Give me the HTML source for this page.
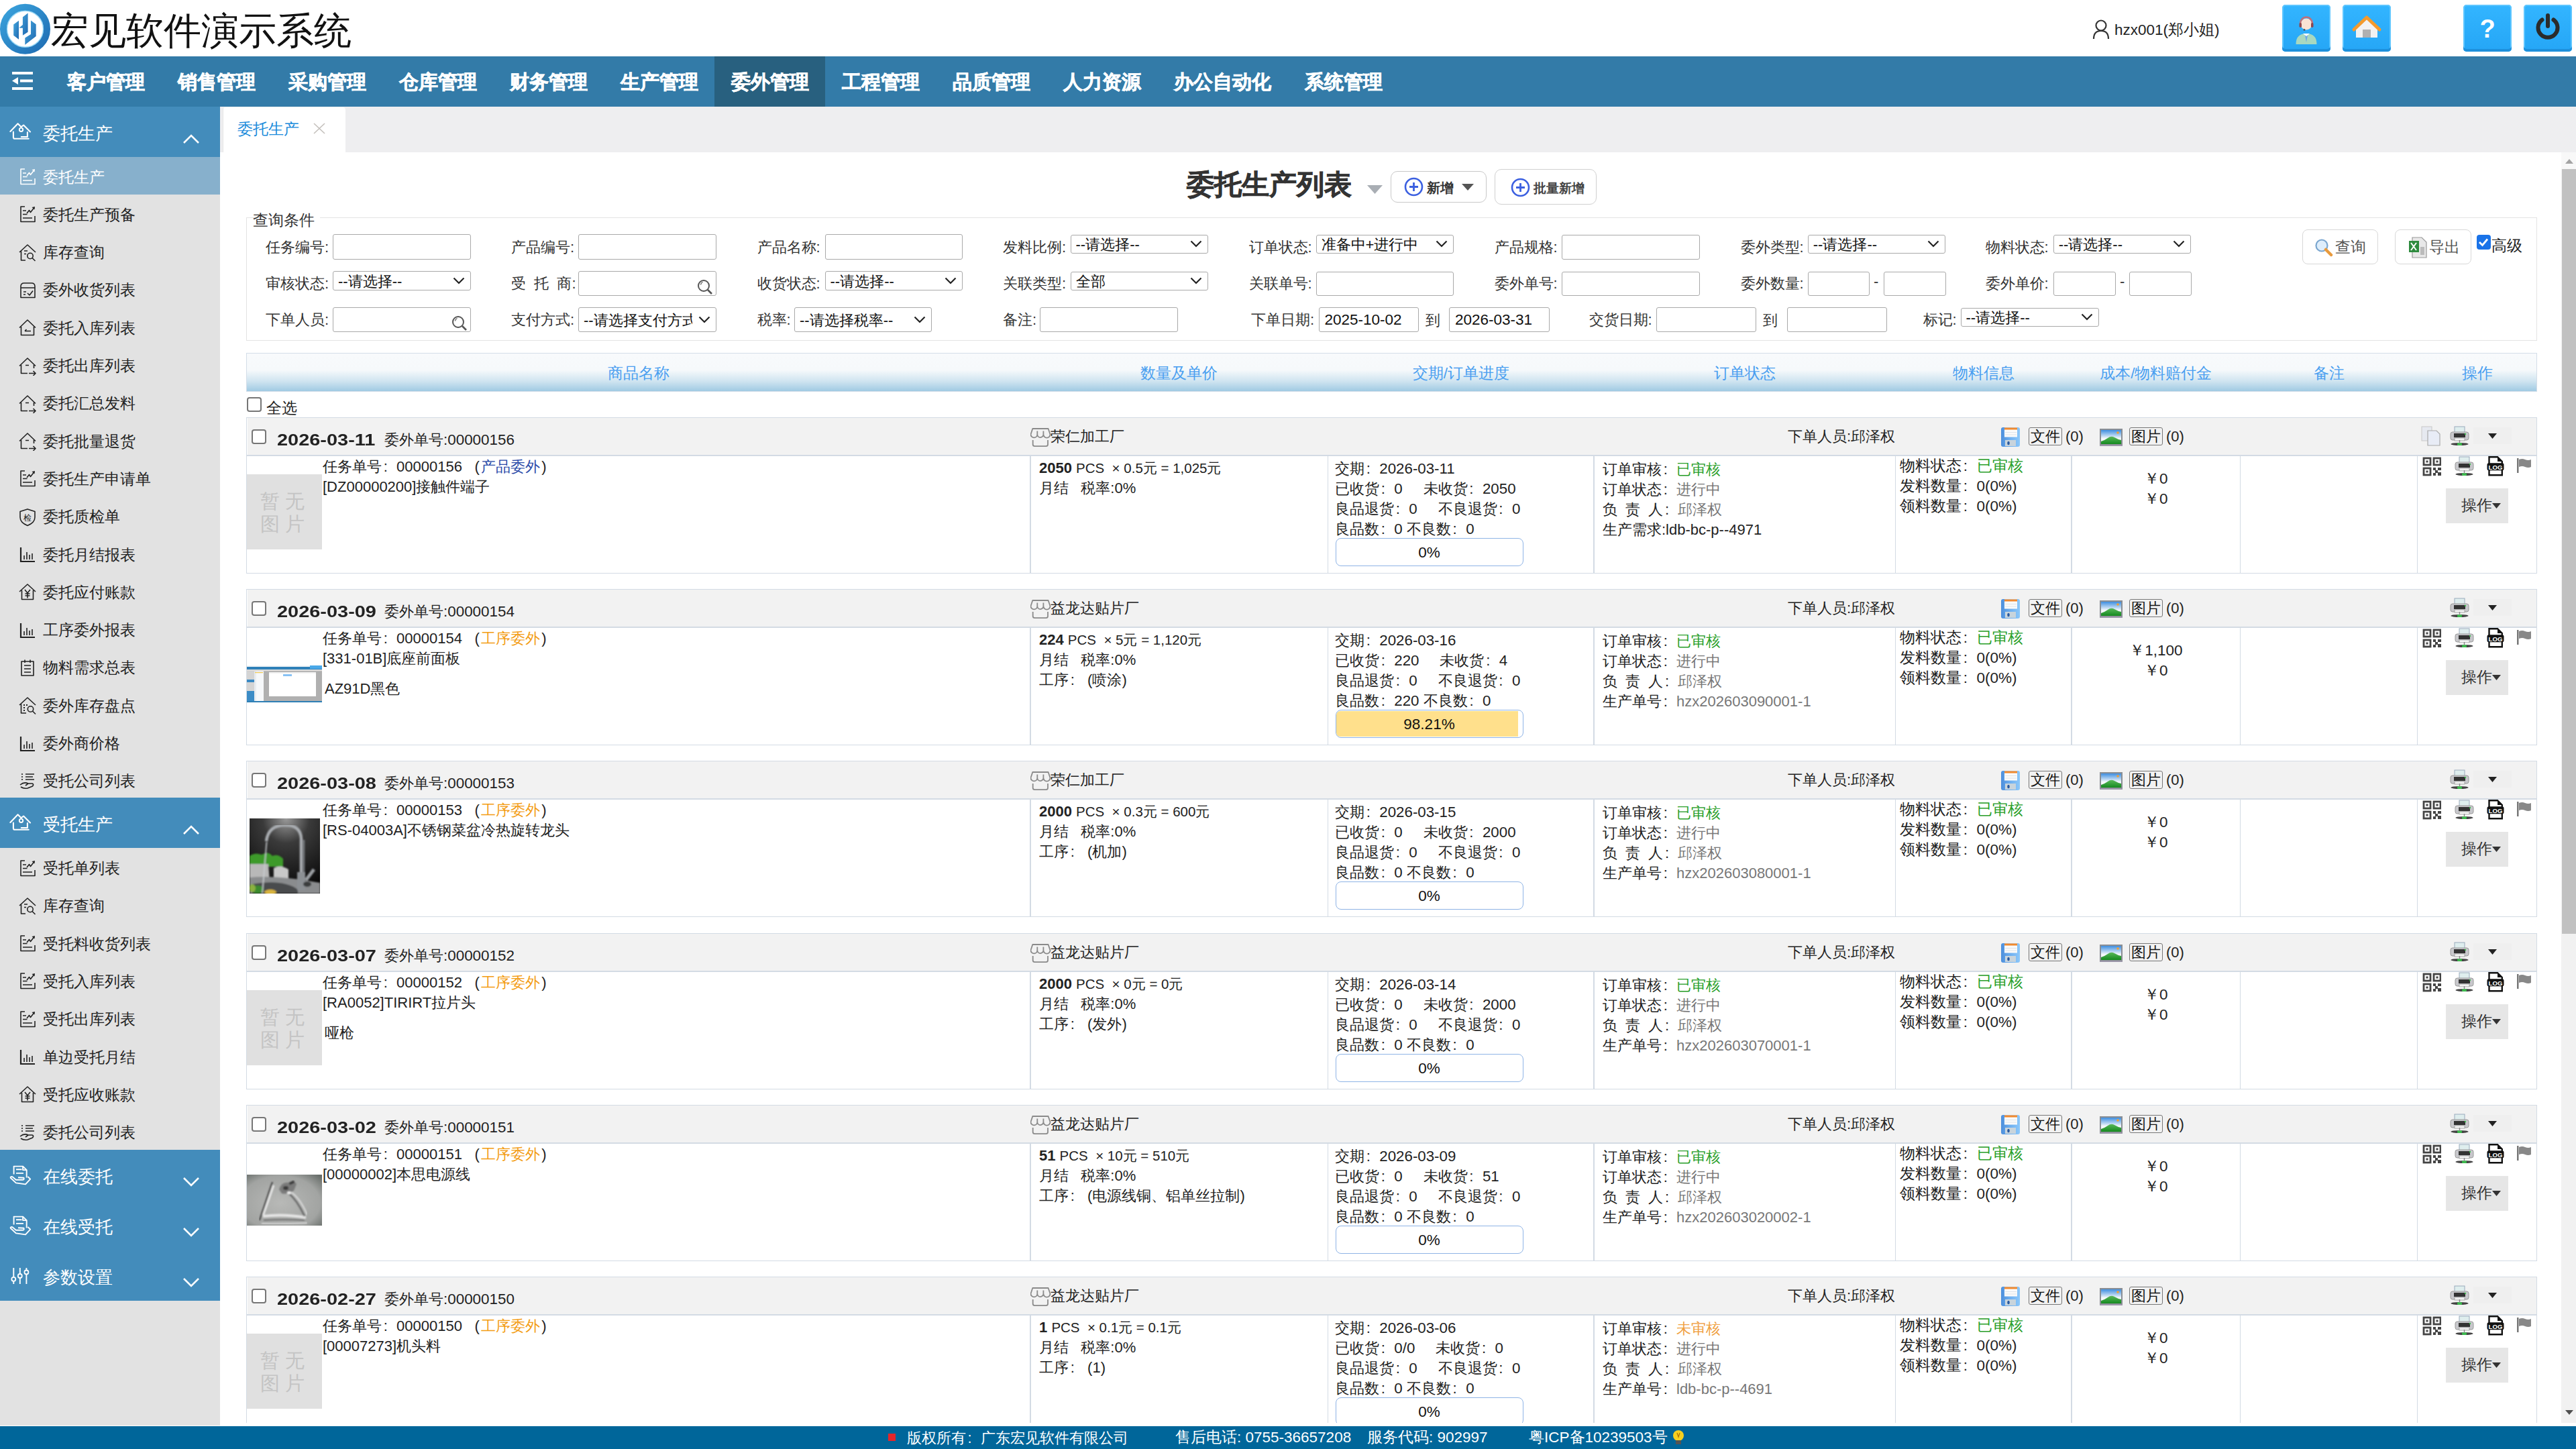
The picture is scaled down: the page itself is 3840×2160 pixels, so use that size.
<!DOCTYPE html><html><head><meta charset="utf-8"><style>
html,body{margin:0;padding:0;}
body{width:3840px;height:2160px;overflow:hidden;position:relative;background:#fff;font-family:"Liberation Sans",sans-serif;color:#222;}
.t{position:absolute;white-space:nowrap;}
.r{position:absolute;box-sizing:border-box;}
.fc{display:inline-block;width:1em;text-indent:0.12em;}
.fl{display:inline-block;width:1em;text-align:right;padding-right:0.1em;box-sizing:border-box;}
.fr{display:inline-block;width:1em;text-align:left;padding-left:0.1em;box-sizing:border-box;}
</style></head><body>
<svg class="r" style="left:0.0px;top:0.0px;" width="90" height="90" viewBox="0 0 90 90">
<defs><linearGradient id="lr" x1="0" y1="0" x2="1" y2="1"><stop offset="0" stop-color="#3aa2dc"/><stop offset="1" stop-color="#1f6db3"/></linearGradient>
<linearGradient id="lh" x1="0" y1="0" x2="1" y2="1"><stop offset="0" stop-color="#45a8de"/><stop offset="1" stop-color="#1f68b0"/></linearGradient></defs>
<circle cx="37.5" cy="43.3" r="32.5" fill="#fff" stroke="url(#lr)" stroke-width="10"/>
<circle cx="37.5" cy="43.3" r="27" fill="none" stroke="#5cc0f0" stroke-width="1.5" opacity="0.6"/>
<path d="M20.2 36.6 L28 30.7 L28 58.7 L20.2 52.8 Z" fill="url(#lh)"/>
<path d="M33.9 25.5 L41.6 19.6 L41.6 47.8 L33.9 52.8 L33.9 41.8 L28.3 41.8 L33.9 37 Z" fill="url(#lh)"/>
<path d="M46 30.4 L53.7 36.3 L53.7 54 L37.3 66.8 L37.3 56.5 L46 50.9 Z" fill="url(#lh)"/>
</svg>
<div class="t" style="left:76.0px;top:1.0px;font-size:56px;line-height:90px;color:#111;font-weight:normal;">宏见软件演示系统</div>
<svg class="r" style="left:3119.0px;top:29.0px;" width="26" height="30" viewBox="0 0 26 30"><circle cx="13" cy="9" r="7.5" fill="none" stroke="#333" stroke-width="2.2"/><path d="M2 29 C2 20 7 17 13 17 C19 17 24 20 24 29" fill="none" stroke="#333" stroke-width="2.2"/></svg>
<div class="t" style="left:3152.0px;top:27.0px;font-size:22.5px;line-height:36px;color:#222;font-weight:normal;">hzx001(郑小姐)</div>
<div class="r" style="left:3402.0px;top:7.0px;width:72.0px;height:70.0px;border-radius:5px;background:linear-gradient(#33b5ff,#25a6f6);box-shadow:inset 0 -4px 0 #1e90dc, inset 0 0 0 2px #5ec6ff;"></div>
<svg class="r" style="left:3402.0px;top:7.0px;" width="72" height="70" viewBox="0 0 72 70"><circle cx="36" cy="29" r="8.5" fill="#f8e2d4"/><path d="M27 28 a9 9.5 0 0 1 18 0" fill="none" stroke="#c0707a" stroke-width="2.5"/><rect x="25.5" y="27" width="3.5" height="7" rx="1.7" fill="#8a4750"/><rect x="43" y="27" width="3.5" height="7" rx="1.7" fill="#8a4750"/><circle cx="33" cy="37.5" r="1.4" fill="#555"/><path d="M20.5 59 C20.5 48 26 43 36 43 C46 43 51.5 48 51.5 59 Z" fill="#a8d8c0"/><path d="M33.5 43 L36 56 L38.5 43 Z" fill="#6aa6e6"/><path d="M31 43 L36 47 L41 43" fill="#fff"/></svg>
<div class="r" style="left:3492.0px;top:7.0px;width:72.0px;height:70.0px;border-radius:5px;background:linear-gradient(#33b5ff,#25a6f6);box-shadow:inset 0 -4px 0 #1e90dc, inset 0 0 0 2px #5ec6ff;"></div>
<svg class="r" style="left:3492.0px;top:7.0px;" width="72" height="70" viewBox="0 0 72 70"><path d="M20 35 L36 19 L52 35 L52 49 L20 49 Z" fill="#f2f2f2"/><path d="M17 37 L36 19 L55 37" fill="none" stroke="#f39a2c" stroke-width="5" stroke-linejoin="round" stroke-linecap="round"/>
<rect x="30" y="37" width="12" height="12" fill="#b0b0b0"/></svg>
<div class="r" style="left:3672.0px;top:7.0px;width:72.0px;height:70.0px;border-radius:5px;background:linear-gradient(#33b5ff,#25a6f6);box-shadow:inset 0 -4px 0 #1e90dc, inset 0 0 0 2px #5ec6ff;"></div>
<svg class="r" style="left:3672.0px;top:7.0px;" width="72" height="70" viewBox="0 0 72 70"><text x="36" y="49" text-anchor="middle" font-family="Liberation Sans" font-weight="bold" font-size="38" fill="#fff">?</text></svg>
<div class="r" style="left:3762.0px;top:7.0px;width:72.0px;height:70.0px;border-radius:5px;background:linear-gradient(#33b5ff,#25a6f6);box-shadow:inset 0 -4px 0 #1e90dc, inset 0 0 0 2px #5ec6ff;"></div>
<svg class="r" style="left:3762.0px;top:7.0px;" width="72" height="70" viewBox="0 0 72 70"><path d="M27.5 22.5 A14.5 14.5 0 1 0 44.5 22.5" fill="none" stroke="#2b2b2b" stroke-width="6" stroke-linecap="round"/>
<line x1="36" y1="16" x2="36" y2="32" stroke="#2b2b2b" stroke-width="6" stroke-linecap="round"/></svg>
<div class="r" style="left:0.0px;top:84.0px;width:3840.0px;height:75.0px;background:#337ba8;"></div>
<svg class="r" style="left:18.0px;top:107.0px;" width="31" height="27" viewBox="0 0 31 27"><rect x="0" y="0" width="31" height="4" fill="#fff"/><rect x="12" y="11.5" width="19" height="4" fill="#fff"/><rect x="0" y="23" width="31" height="4" fill="#fff"/><path d="M0 13.5 L9 8 L9 19 Z" fill="#fff"/></svg>
<div class="t" style="left:75.0px;width:165px;text-align:center;top:98.8px;font-size:29px;line-height:46px;color:#fff;font-weight:bold;-webkit-text-stroke:0.6px #fff;">客户管理</div>
<div class="t" style="left:240.0px;width:165px;text-align:center;top:98.8px;font-size:29px;line-height:46px;color:#fff;font-weight:bold;-webkit-text-stroke:0.6px #fff;">销售管理</div>
<div class="t" style="left:405.0px;width:165px;text-align:center;top:98.8px;font-size:29px;line-height:46px;color:#fff;font-weight:bold;-webkit-text-stroke:0.6px #fff;">采购管理</div>
<div class="t" style="left:570.0px;width:165px;text-align:center;top:98.8px;font-size:29px;line-height:46px;color:#fff;font-weight:bold;-webkit-text-stroke:0.6px #fff;">仓库管理</div>
<div class="t" style="left:735.0px;width:165px;text-align:center;top:98.8px;font-size:29px;line-height:46px;color:#fff;font-weight:bold;-webkit-text-stroke:0.6px #fff;">财务管理</div>
<div class="t" style="left:900.0px;width:165px;text-align:center;top:98.8px;font-size:29px;line-height:46px;color:#fff;font-weight:bold;-webkit-text-stroke:0.6px #fff;">生产管理</div>
<div class="r" style="left:1065.0px;top:84.0px;width:165.0px;height:75.0px;background:#28607f;"></div>
<div class="t" style="left:1065.0px;width:165px;text-align:center;top:98.8px;font-size:29px;line-height:46px;color:#fff;font-weight:bold;-webkit-text-stroke:0.6px #fff;">委外管理</div>
<div class="t" style="left:1230.0px;width:165px;text-align:center;top:98.8px;font-size:29px;line-height:46px;color:#fff;font-weight:bold;-webkit-text-stroke:0.6px #fff;">工程管理</div>
<div class="t" style="left:1395.0px;width:165px;text-align:center;top:98.8px;font-size:29px;line-height:46px;color:#fff;font-weight:bold;-webkit-text-stroke:0.6px #fff;">品质管理</div>
<div class="t" style="left:1560.0px;width:165px;text-align:center;top:98.8px;font-size:29px;line-height:46px;color:#fff;font-weight:bold;-webkit-text-stroke:0.6px #fff;">人力资源</div>
<div class="t" style="left:1725.0px;width:195px;text-align:center;top:98.8px;font-size:29px;line-height:46px;color:#fff;font-weight:bold;-webkit-text-stroke:0.6px #fff;">办公自动化</div>
<div class="t" style="left:1920.0px;width:165px;text-align:center;top:98.8px;font-size:29px;line-height:46px;color:#fff;font-weight:bold;-webkit-text-stroke:0.6px #fff;">系统管理</div>
<div class="r" style="left:0.0px;top:159.0px;width:328.0px;height:1966.0px;background:#e2e2e2;"></div>
<div class="r" style="left:0.0px;top:159.0px;width:328.0px;height:75.0px;background:#438cbb;"></div>
<svg class="r" style="left:14.0px;top:181.0px;" width="34" height="32" viewBox="0 0 34 32"><path d="M1.4 15 L12.6 3.3 L17.5 8.3 M17.8 8 L21.1 5.6 L31 15.5 M5.9 15.5 V23.5 Q5.9 25.8 8 25.8 H28.7 M26.9 16 V23 H17.8" fill="none" stroke="#fff" stroke-width="2.1" stroke-linejoin="round" stroke-linecap="round"/><circle cx="17.5" cy="12.3" r="2.7" fill="none" stroke="#fff" stroke-width="1.9"/></svg>
<div class="t" style="left:63.5px;top:177.5px;font-size:26px;line-height:42px;color:#fff;font-weight:normal;">委托生产</div>
<svg class="r" style="left:272.0px;top:200.0px;" width="26" height="15" viewBox="0 0 26 15"><path d="M2 13 L13 2 L24 13" fill="none" stroke="#fff" stroke-width="2.6"/></svg>
<div class="r" style="left:0.0px;top:234.0px;width:328.0px;height:56.0px;background:#87b0cc;"></div>
<svg class="r" style="left:28.0px;top:250.0px;" width="27" height="28" viewBox="0 0 27 28"><path d="M9 2 H3 V24.5 H24 V16 M6 8 H11 M6 13.5 H12.5 M6 19 H20 M12 12 L15.5 7.5 L17.5 10.5 L23 3.5" stroke="#fff" stroke-width="1.6" fill="none" stroke-linejoin="round"/><path d="M19.5 3 L24 2 L23.5 6.5 Z" fill="#fff"/></svg>
<div class="t" style="left:64.0px;top:246.5px;font-size:22.5px;line-height:36px;color:#fff;font-weight:normal;">委托生产</div>
<svg class="r" style="left:28.0px;top:306.3px;" width="27" height="28" viewBox="0 0 27 28"><path d="M9 2 H3 V24.5 H24 V16 M6 8 H11 M6 13.5 H12.5 M6 19 H20 M12 12 L15.5 7.5 L17.5 10.5 L23 3.5" stroke="#222" stroke-width="1.6" fill="none" stroke-linejoin="round"/><path d="M19.5 3 L24 2 L23.5 6.5 Z" fill="#222"/></svg>
<div class="t" style="left:64.0px;top:302.8px;font-size:22.5px;line-height:36px;color:#222;font-weight:normal;">委托生产预备</div>
<svg class="r" style="left:28.0px;top:362.6px;" width="27" height="28" viewBox="0 0 27 28"><path d="M1 13 L13 2 L25 13 M3.5 11.5 V25 H10 M8 11 H13 M8 15.5 H11" stroke="#222" stroke-width="1.6" fill="none" stroke-linejoin="round"/><circle cx="17" cy="18.5" r="4.2" stroke="#222" stroke-width="1.6" fill="none" stroke-linejoin="round"/><path d="M20 21.5 L24.5 26" stroke="#222" stroke-width="1.6" fill="none" stroke-linejoin="round"/></svg>
<div class="t" style="left:64.0px;top:359.1px;font-size:22.5px;line-height:36px;color:#222;font-weight:normal;">库存查询</div>
<svg class="r" style="left:28.0px;top:418.9px;" width="27" height="28" viewBox="0 0 27 28"><path d="M3 24.5 V8 Q3 3 8 3 H19 Q24 3 24 8 V24.5 Z M3 10 H24 M7 16 H11 M7 20 H10 M13 18 L16 21 L21 14.5" stroke="#222" stroke-width="1.6" fill="none" stroke-linejoin="round"/></svg>
<div class="t" style="left:64.0px;top:415.4px;font-size:22.5px;line-height:36px;color:#222;font-weight:normal;">委外收货列表</div>
<svg class="r" style="left:28.0px;top:475.2px;" width="27" height="28" viewBox="0 0 27 28"><path d="M1 13.5 L13 2 L25 13.5 M3.5 12 V24.5 H22.5 V12 M9 18.5 H18" stroke="#222" stroke-width="1.6" fill="none" stroke-linejoin="round"/><path d="M9 18.5 L11.5 16" stroke="#222" stroke-width="1.6" fill="none" stroke-linejoin="round"/></svg>
<div class="t" style="left:64.0px;top:471.7px;font-size:22.5px;line-height:36px;color:#222;font-weight:normal;">委托入库列表</div>
<svg class="r" style="left:28.0px;top:531.5px;" width="27" height="28" viewBox="0 0 27 28"><path d="M1 13.5 L13 2 L25 13.5 M3.5 12 V24.5 H13 M22.5 12 V17 M10 12.5 H15 M15 24.5 H25" stroke="#222" stroke-width="1.6" fill="none" stroke-linejoin="round"/><path d="M21.5 21 L25 24.5 L21.5 28" stroke="#222" stroke-width="1.6" fill="none" stroke-linejoin="round"/></svg>
<div class="t" style="left:64.0px;top:528.0px;font-size:22.5px;line-height:36px;color:#222;font-weight:normal;">委托出库列表</div>
<svg class="r" style="left:28.0px;top:587.8px;" width="27" height="28" viewBox="0 0 27 28"><path d="M1 13.5 L13 2 L25 13.5 M3.5 12 V24.5 H13 M22.5 12 V17 M10 12.5 H15 M15 24.5 H25" stroke="#222" stroke-width="1.6" fill="none" stroke-linejoin="round"/><path d="M21.5 21 L25 24.5 L21.5 28" stroke="#222" stroke-width="1.6" fill="none" stroke-linejoin="round"/></svg>
<div class="t" style="left:64.0px;top:584.3px;font-size:22.5px;line-height:36px;color:#222;font-weight:normal;">委托汇总发料</div>
<svg class="r" style="left:28.0px;top:644.1px;" width="27" height="28" viewBox="0 0 27 28"><path d="M1 13.5 L13 2 L25 13.5 M3.5 12 V24.5 H13 M22.5 12 V17 M10 12.5 H15 M15 24.5 H25" stroke="#222" stroke-width="1.6" fill="none" stroke-linejoin="round"/><path d="M21.5 21 L25 24.5 L21.5 28" stroke="#222" stroke-width="1.6" fill="none" stroke-linejoin="round"/></svg>
<div class="t" style="left:64.0px;top:640.6px;font-size:22.5px;line-height:36px;color:#222;font-weight:normal;">委托批量退货</div>
<svg class="r" style="left:28.0px;top:700.4px;" width="27" height="28" viewBox="0 0 27 28"><path d="M9 2 H3 V24.5 H24 V16 M6 8 H11 M6 13.5 H12.5 M6 19 H20 M12 12 L15.5 7.5 L17.5 10.5 L23 3.5" stroke="#222" stroke-width="1.6" fill="none" stroke-linejoin="round"/><path d="M19.5 3 L24 2 L23.5 6.5 Z" fill="#222"/></svg>
<div class="t" style="left:64.0px;top:696.9px;font-size:22.5px;line-height:36px;color:#222;font-weight:normal;">委托生产申请单</div>
<svg class="r" style="left:28.0px;top:756.7px;" width="27" height="28" viewBox="0 0 27 28"><path d="M13 2 L24 5.5 V14 Q24 22 13 26.5 Q2 22 2 14 V5.5 Z" stroke="#222" stroke-width="1.6" fill="none" stroke-linejoin="round"/><text x="13" y="18.5" font-size="12" text-anchor="middle" fill="#222">检</text></svg>
<div class="t" style="left:64.0px;top:753.2px;font-size:22.5px;line-height:36px;color:#222;font-weight:normal;">委托质检单</div>
<svg class="r" style="left:28.0px;top:813.0px;" width="27" height="28" viewBox="0 0 27 28"><path d="M3 3 V24 H24" stroke="#222" stroke-width="2.2" fill="none"/><path d="M8 15 V21 M12 10 V21 M16 14 V21 M20 12 V21" stroke="#222" stroke-width="1.6" fill="none" stroke-linejoin="round"/></svg>
<div class="t" style="left:64.0px;top:809.5px;font-size:22.5px;line-height:36px;color:#222;font-weight:normal;">委托月结报表</div>
<svg class="r" style="left:28.0px;top:869.3px;" width="27" height="28" viewBox="0 0 27 28"><path d="M1 13 L13 2 L25 13 M4.5 11 V24.5 H21.5 V11" stroke="#222" stroke-width="1.6" fill="none" stroke-linejoin="round"/><path d="M9 10 L13 15 L17 10 M13 15 V22.5 M9.5 16 H16.5 M9.5 19 H16.5" stroke="#222" stroke-width="1.6" fill="none"/></svg>
<div class="t" style="left:64.0px;top:865.8px;font-size:22.5px;line-height:36px;color:#222;font-weight:normal;">委托应付账款</div>
<svg class="r" style="left:28.0px;top:925.6px;" width="27" height="28" viewBox="0 0 27 28"><path d="M3 3 V24 H24" stroke="#222" stroke-width="2.2" fill="none"/><path d="M8 15 V21 M12 10 V21 M16 14 V21 M20 12 V21" stroke="#222" stroke-width="1.6" fill="none" stroke-linejoin="round"/></svg>
<div class="t" style="left:64.0px;top:922.1px;font-size:22.5px;line-height:36px;color:#222;font-weight:normal;">工序委外报表</div>
<svg class="r" style="left:28.0px;top:981.9px;" width="27" height="28" viewBox="0 0 27 28"><path d="M4 4 H22 V25 H4 Z M8 10 H18 M8 15 H18 M8 20 H18 M9 1.5 V6 M17 1.5 V6" stroke="#222" stroke-width="1.6" fill="none" stroke-linejoin="round"/></svg>
<div class="t" style="left:64.0px;top:978.4px;font-size:22.5px;line-height:36px;color:#222;font-weight:normal;">物料需求总表</div>
<svg class="r" style="left:28.0px;top:1038.2px;" width="27" height="28" viewBox="0 0 27 28"><path d="M1 13 L13 2 L25 13 M3.5 11.5 V25 H11" stroke="#222" stroke-width="1.6" fill="none" stroke-linejoin="round"/><circle cx="17.5" cy="19" r="4.2" stroke="#222" stroke-width="1.6" fill="none" stroke-linejoin="round"/><path d="M20.5 22 L25 26.5" stroke="#222" stroke-width="1.6" fill="none" stroke-linejoin="round"/><g fill="#222"><rect x="7" y="12" width="2" height="2"/><rect x="7" y="16" width="2" height="2"/><rect x="7" y="20" width="2" height="2"/><rect x="11" y="12" width="2" height="2"/></g></svg>
<div class="t" style="left:64.0px;top:1034.7px;font-size:22.5px;line-height:36px;color:#222;font-weight:normal;">委外库存盘点</div>
<svg class="r" style="left:28.0px;top:1094.5px;" width="27" height="28" viewBox="0 0 27 28"><path d="M3 3 V24 H24" stroke="#222" stroke-width="2.2" fill="none"/><path d="M8 15 V21 M12 10 V21 M16 14 V21 M20 12 V21" stroke="#222" stroke-width="1.6" fill="none" stroke-linejoin="round"/></svg>
<div class="t" style="left:64.0px;top:1091.0px;font-size:22.5px;line-height:36px;color:#222;font-weight:normal;">委外商价格</div>
<svg class="r" style="left:28.0px;top:1150.8px;" width="27" height="28" viewBox="0 0 27 28"><path d="M10 3 H23 M10 7 H21 M10 11 H23 M2 19 Q8 14 14 17 L20 17 Q23 18 20.5 21 L13 24 Q7 25 3 22" stroke="#222" stroke-width="1.6" fill="none" stroke-linejoin="round"/><path d="M14 17 L10 20" stroke="#222" stroke-width="1.6" fill="none" stroke-linejoin="round"/><g fill="#222"><circle cx="5" cy="3" r="1.1"/><circle cx="5" cy="7" r="1.1"/><circle cx="5" cy="11" r="1.1"/></g></svg>
<div class="t" style="left:64.0px;top:1147.3px;font-size:22.5px;line-height:36px;color:#222;font-weight:normal;">受托公司列表</div>
<div class="r" style="left:0.0px;top:1189.0px;width:328.0px;height:75.0px;background:#438cbb;"></div>
<svg class="r" style="left:14.0px;top:1211.0px;" width="34" height="32" viewBox="0 0 34 32"><path d="M1.4 15 L12.6 3.3 L17.5 8.3 M17.8 8 L21.1 5.6 L31 15.5 M5.9 15.5 V23.5 Q5.9 25.8 8 25.8 H28.7 M26.9 16 V23 H17.8" fill="none" stroke="#fff" stroke-width="2.1" stroke-linejoin="round" stroke-linecap="round"/><circle cx="17.5" cy="12.3" r="2.7" fill="none" stroke="#fff" stroke-width="1.9"/></svg>
<div class="t" style="left:63.5px;top:1207.5px;font-size:26px;line-height:42px;color:#fff;font-weight:normal;">受托生产</div>
<svg class="r" style="left:272.0px;top:1230.0px;" width="26" height="15" viewBox="0 0 26 15"><path d="M2 13 L13 2 L24 13" fill="none" stroke="#fff" stroke-width="2.6"/></svg>
<svg class="r" style="left:28.0px;top:1280.5px;" width="27" height="28" viewBox="0 0 27 28"><path d="M9 2 H3 V24.5 H24 V16 M6 8 H11 M6 13.5 H12.5 M6 19 H20 M12 12 L15.5 7.5 L17.5 10.5 L23 3.5" stroke="#222" stroke-width="1.6" fill="none" stroke-linejoin="round"/><path d="M19.5 3 L24 2 L23.5 6.5 Z" fill="#222"/></svg>
<div class="t" style="left:64.0px;top:1277.0px;font-size:22.5px;line-height:36px;color:#222;font-weight:normal;">受托单列表</div>
<svg class="r" style="left:28.0px;top:1336.8px;" width="27" height="28" viewBox="0 0 27 28"><path d="M1 13 L13 2 L25 13 M3.5 11.5 V25 H10 M8 11 H13 M8 15.5 H11" stroke="#222" stroke-width="1.6" fill="none" stroke-linejoin="round"/><circle cx="17" cy="18.5" r="4.2" stroke="#222" stroke-width="1.6" fill="none" stroke-linejoin="round"/><path d="M20 21.5 L24.5 26" stroke="#222" stroke-width="1.6" fill="none" stroke-linejoin="round"/></svg>
<div class="t" style="left:64.0px;top:1333.3px;font-size:22.5px;line-height:36px;color:#222;font-weight:normal;">库存查询</div>
<svg class="r" style="left:28.0px;top:1393.1px;" width="27" height="28" viewBox="0 0 27 28"><path d="M9 2 H3 V24.5 H24 V16 M6 8 H11 M6 13.5 H12.5 M6 19 H20 M12 12 L15.5 7.5 L17.5 10.5 L23 3.5" stroke="#222" stroke-width="1.6" fill="none" stroke-linejoin="round"/><path d="M19.5 3 L24 2 L23.5 6.5 Z" fill="#222"/></svg>
<div class="t" style="left:64.0px;top:1389.6px;font-size:22.5px;line-height:36px;color:#222;font-weight:normal;">受托料收货列表</div>
<svg class="r" style="left:28.0px;top:1449.4px;" width="27" height="28" viewBox="0 0 27 28"><path d="M9 2 H3 V24.5 H24 V16 M6 8 H11 M6 13.5 H12.5 M6 19 H20 M12 12 L15.5 7.5 L17.5 10.5 L23 3.5" stroke="#222" stroke-width="1.6" fill="none" stroke-linejoin="round"/><path d="M19.5 3 L24 2 L23.5 6.5 Z" fill="#222"/></svg>
<div class="t" style="left:64.0px;top:1445.9px;font-size:22.5px;line-height:36px;color:#222;font-weight:normal;">受托入库列表</div>
<svg class="r" style="left:28.0px;top:1505.7px;" width="27" height="28" viewBox="0 0 27 28"><path d="M9 2 H3 V24.5 H24 V16 M6 8 H11 M6 13.5 H12.5 M6 19 H20 M12 12 L15.5 7.5 L17.5 10.5 L23 3.5" stroke="#222" stroke-width="1.6" fill="none" stroke-linejoin="round"/><path d="M19.5 3 L24 2 L23.5 6.5 Z" fill="#222"/></svg>
<div class="t" style="left:64.0px;top:1502.2px;font-size:22.5px;line-height:36px;color:#222;font-weight:normal;">受托出库列表</div>
<svg class="r" style="left:28.0px;top:1562.0px;" width="27" height="28" viewBox="0 0 27 28"><path d="M3 3 V24 H24" stroke="#222" stroke-width="2.2" fill="none"/><path d="M8 15 V21 M12 10 V21 M16 14 V21 M20 12 V21" stroke="#222" stroke-width="1.6" fill="none" stroke-linejoin="round"/></svg>
<div class="t" style="left:64.0px;top:1558.5px;font-size:22.5px;line-height:36px;color:#222;font-weight:normal;">单边受托月结</div>
<svg class="r" style="left:28.0px;top:1618.3px;" width="27" height="28" viewBox="0 0 27 28"><path d="M1 13 L13 2 L25 13 M4.5 11 V24.5 H21.5 V11" stroke="#222" stroke-width="1.6" fill="none" stroke-linejoin="round"/><path d="M9 10 L13 15 L17 10 M13 15 V22.5 M9.5 16 H16.5 M9.5 19 H16.5" stroke="#222" stroke-width="1.6" fill="none"/></svg>
<div class="t" style="left:64.0px;top:1614.8px;font-size:22.5px;line-height:36px;color:#222;font-weight:normal;">受托应收账款</div>
<svg class="r" style="left:28.0px;top:1674.6px;" width="27" height="28" viewBox="0 0 27 28"><path d="M10 3 H23 M10 7 H21 M10 11 H23 M2 19 Q8 14 14 17 L20 17 Q23 18 20.5 21 L13 24 Q7 25 3 22" stroke="#222" stroke-width="1.6" fill="none" stroke-linejoin="round"/><path d="M14 17 L10 20" stroke="#222" stroke-width="1.6" fill="none" stroke-linejoin="round"/><g fill="#222"><circle cx="5" cy="3" r="1.1"/><circle cx="5" cy="7" r="1.1"/><circle cx="5" cy="11" r="1.1"/></g></svg>
<div class="t" style="left:64.0px;top:1671.1px;font-size:22.5px;line-height:36px;color:#222;font-weight:normal;">委托公司列表</div>
<div class="r" style="left:0.0px;top:1714.0px;width:328.0px;height:75.0px;background:#438cbb;"></div>
<svg class="r" style="left:14.0px;top:1736.0px;" width="34" height="32" viewBox="0 0 34 32"><path d="M6.6 14.5 V2.6 H20.1 L25.7 8.1 V19.5 M20.1 2.6 V8.1 H25.7 M10 7.3 H18.5 M10 12.9 H21 M1.2 19.2 Q3 17.2 5 18.6 L9.8 22.8 H19.5 Q22.5 22.8 21.5 19.8 L13 19.2 M1.2 19.2 L9.8 27.4 L24 29.4 L31.2 21.6 L27.5 18" fill="none" stroke="#fff" stroke-width="1.9" stroke-linejoin="round"/></svg>
<div class="t" style="left:63.5px;top:1732.5px;font-size:26px;line-height:42px;color:#fff;font-weight:normal;">在线委托</div>
<svg class="r" style="left:272.0px;top:1754.0px;" width="26" height="15" viewBox="0 0 26 15"><path d="M2 2 L13 13 L24 2" fill="none" stroke="#fff" stroke-width="2.6"/></svg>
<div class="r" style="left:0.0px;top:1789.0px;width:328.0px;height:75.0px;background:#438cbb;"></div>
<svg class="r" style="left:14.0px;top:1811.0px;" width="34" height="32" viewBox="0 0 34 32"><path d="M6.6 14.5 V2.6 H20.1 L25.7 8.1 V19.5 M20.1 2.6 V8.1 H25.7 M10 7.3 H18.5 M10 12.9 H21 M1.2 19.2 Q3 17.2 5 18.6 L9.8 22.8 H19.5 Q22.5 22.8 21.5 19.8 L13 19.2 M1.2 19.2 L9.8 27.4 L24 29.4 L31.2 21.6 L27.5 18" fill="none" stroke="#fff" stroke-width="1.9" stroke-linejoin="round"/></svg>
<div class="t" style="left:63.5px;top:1807.5px;font-size:26px;line-height:42px;color:#fff;font-weight:normal;">在线受托</div>
<svg class="r" style="left:272.0px;top:1829.0px;" width="26" height="15" viewBox="0 0 26 15"><path d="M2 2 L13 13 L24 2" fill="none" stroke="#fff" stroke-width="2.6"/></svg>
<div class="r" style="left:0.0px;top:1864.0px;width:328.0px;height:75.0px;background:#438cbb;"></div>
<svg class="r" style="left:14.0px;top:1886.0px;" width="34" height="32" viewBox="0 0 34 32"><path d="M6.3 4 V28 M15.8 4 V28 M25.4 4 V28" stroke="#fff" stroke-width="1.9"/><circle cx="6.3" cy="20.8" r="3" fill="#438cbb" stroke="#fff" stroke-width="1.8"/><circle cx="15.8" cy="16" r="3" fill="#438cbb" stroke="#fff" stroke-width="1.8"/><circle cx="25.4" cy="10.5" r="3" fill="#438cbb" stroke="#fff" stroke-width="1.8"/></svg>
<div class="t" style="left:63.5px;top:1882.5px;font-size:26px;line-height:42px;color:#fff;font-weight:normal;">参数设置</div>
<svg class="r" style="left:272.0px;top:1904.0px;" width="26" height="15" viewBox="0 0 26 15"><path d="M2 2 L13 13 L24 2" fill="none" stroke="#fff" stroke-width="2.6"/></svg>
<div class="r" style="left:328.0px;top:159.0px;width:3512.0px;height:67.5px;background:#eeeef0;"></div>
<div class="r" style="left:332.0px;top:160.0px;width:183.0px;height:66.5px;background:#fff;border-left:1px solid #e6e6e6;border-top-right-radius:4px;border-top-left-radius:3px;"></div>
<div class="t" style="left:354.0px;top:174.5px;font-size:22.5px;line-height:36px;color:#1b8bdb;font-weight:normal;">委托生产</div>
<svg class="r" style="left:467.0px;top:182.5px;" width="18" height="17" viewBox="0 0 18 17"><path d="M1 1 L17 16 M17 1 L1 16" stroke="#c4c0bc" stroke-width="1.6"/></svg>
<div class="r" style="left:3818.0px;top:226.5px;width:22.0px;height:1894.0px;background:#f1f1f1;"></div>
<div class="r" style="left:3818.0px;top:226.5px;width:22.0px;height:25.0px;background:#f8f8f8;"></div>
<div class="r" style="left:3819.0px;top:251.5px;width:21.0px;height:1140.0px;background:#c1c1c1;"></div>
<svg class="r" style="left:3823.5px;top:237.0px;" width="12" height="7" viewBox="0 0 12 7"><path d="M0 7 L6 0 L12 7 Z" fill="#a3a3a3"/></svg>
<svg class="r" style="left:3823.5px;top:2102.0px;" width="12" height="7" viewBox="0 0 12 7"><path d="M0 0 L6 7 L12 0 Z" fill="#505050"/></svg>
<div class="t" style="left:1769.0px;top:242.0px;font-size:41.3px;line-height:66px;color:#333;font-weight:bold;-webkit-text-stroke:0.7px #333;">委托生产列表</div>
<svg class="r" style="left:2038.0px;top:276.0px;" width="23" height="13" viewBox="0 0 23 13"><path d="M0 0 L23 0 L11.5 13 Z" fill="#a9aeb4"/></svg>
<div class="r" style="left:2073.0px;top:255.0px;width:143.0px;height:47.0px;border:1px solid #c8c8c8;border-radius:10px;background:#fff;"></div>
<svg class="r" style="left:2093.0px;top:264.0px;" width="29" height="29" viewBox="0 0 29 29"><circle cx="14.5" cy="14.5" r="12.5" fill="none" stroke="#3b5fe0" stroke-width="2.6"/><path d="M14.5 8 V21 M8 14.5 H21" stroke="#3b5fe0" stroke-width="2.8"/></svg>
<div class="t" style="left:2127.0px;top:265.0px;font-size:19.5px;line-height:31px;color:#333;font-weight:bold;">新增</div>
<svg class="r" style="left:2179.0px;top:274.0px;" width="18" height="10" viewBox="0 0 18 10"><path d="M0 0 L18 0 L9 10 Z" fill="#555"/></svg>
<div class="r" style="left:2228.0px;top:252.0px;width:152.0px;height:53.0px;border:1px solid #d0d0d0;border-radius:10px;background:#fff;"></div>
<svg class="r" style="left:2252.0px;top:265.0px;" width="29" height="29" viewBox="0 0 29 29"><circle cx="14.5" cy="14.5" r="12.5" fill="none" stroke="#3b5fe0" stroke-width="2.6"/><path d="M14.5 8 V21 M8 14.5 H21" stroke="#3b5fe0" stroke-width="2.8"/></svg>
<div class="t" style="left:2286.0px;top:265.5px;font-size:19px;line-height:30px;color:#444;font-weight:bold;">批量新增</div>
<div class="r" style="left:366.5px;top:324.0px;width:3415.0px;height:183.5px;border:1.5px solid #e3e3e3;border-top:none;"></div>
<div class="r" style="left:366.5px;top:323.5px;width:20.0px;height:1.5px;background:#e3e3e3;"></div>
<div class="r" style="left:477.0px;top:323.5px;width:3304.5px;height:1.5px;background:#e3e3e3;"></div>
<div class="t" style="left:377.0px;top:311.0px;font-size:22.5px;line-height:36px;color:#333;font-weight:normal;">查询条件</div>
<div class="t" style="left:396.0px;top:350.5px;font-size:22px;line-height:35px;color:#333;font-weight:normal;">任务编号:</div>
<div class="r" style="left:496.0px;top:349.0px;width:206.0px;height:38.0px;border:1.5px solid #a9a9a9;border-radius:3px;background:#fff;"></div>
<div class="t" style="left:396.0px;top:405.0px;font-size:22px;line-height:35px;color:#333;font-weight:normal;">审核状态:</div>
<div class="r" style="left:496.0px;top:404.0px;width:206.0px;height:29.0px;border:1.5px solid #a9a9a9;border-radius:3px;background:#fff;"></div>
<div class="t" style="left:504.0px;top:401.5px;font-size:22px;line-height:35px;color:#111;font-weight:normal;width:162px;overflow:hidden;">--请选择--</div>
<svg class="r" style="left:675.0px;top:412.5px;" width="18" height="11" viewBox="0 0 18 11"><path d="M1.5 1.5 L9 9 L16.5 1.5" fill="none" stroke="#222" stroke-width="2.2"/></svg>
<div class="t" style="left:396.0px;top:459.0px;font-size:22px;line-height:35px;color:#333;font-weight:normal;">下单人员:</div>
<div class="r" style="left:496.0px;top:458.0px;width:206.0px;height:37.0px;border:1.5px solid #a9a9a9;border-radius:3px;background:#fff;"></div>
<svg class="r" style="left:672.0px;top:469.0px;" width="26" height="26" viewBox="0 0 26 26"><circle cx="11" cy="11" r="8" fill="none" stroke="#555" stroke-width="2"/><path d="M6.5 9.5 a5 5 0 0 1 3-4" fill="none" stroke="#555" stroke-width="1.3"/><path d="M17 17 L23 23" stroke="#555" stroke-width="2.6"/></svg>
<div class="t" style="left:762.0px;top:350.5px;font-size:22px;line-height:35px;color:#333;font-weight:normal;">产品编号:</div>
<div class="r" style="left:862.0px;top:349.0px;width:206.0px;height:38.0px;border:1.5px solid #a9a9a9;border-radius:3px;background:#fff;"></div>
<div class="t" style="left:762.0px;top:405.0px;font-size:22px;line-height:35px;color:#333;font-weight:normal;">受&nbsp;&nbsp;托&nbsp;&nbsp;商:</div>
<div class="r" style="left:862.0px;top:404.0px;width:206.0px;height:37.0px;border:1.5px solid #a9a9a9;border-radius:3px;background:#fff;"></div>
<svg class="r" style="left:1038.0px;top:415.0px;" width="26" height="26" viewBox="0 0 26 26"><circle cx="11" cy="11" r="8" fill="none" stroke="#555" stroke-width="2"/><path d="M6.5 9.5 a5 5 0 0 1 3-4" fill="none" stroke="#555" stroke-width="1.3"/><path d="M17 17 L23 23" stroke="#555" stroke-width="2.6"/></svg>
<div class="t" style="left:762.0px;top:459.0px;font-size:22px;line-height:35px;color:#333;font-weight:normal;">支付方式:</div>
<div class="r" style="left:862.0px;top:458.0px;width:206.0px;height:37.0px;border:1.5px solid #a9a9a9;border-radius:3px;background:#fff;"></div>
<div class="t" style="left:870.0px;top:459.5px;font-size:22px;line-height:35px;color:#111;font-weight:normal;width:162px;overflow:hidden;">--请选择支付方式</div>
<svg class="r" style="left:1041.0px;top:470.5px;" width="18" height="11" viewBox="0 0 18 11"><path d="M1.5 1.5 L9 9 L16.5 1.5" fill="none" stroke="#222" stroke-width="2.2"/></svg>
<div class="t" style="left:1128.5px;top:350.5px;font-size:22px;line-height:35px;color:#333;font-weight:normal;">产品名称:</div>
<div class="r" style="left:1229.5px;top:349.0px;width:205.0px;height:38.0px;border:1.5px solid #a9a9a9;border-radius:3px;background:#fff;"></div>
<div class="t" style="left:1128.5px;top:405.0px;font-size:22px;line-height:35px;color:#333;font-weight:normal;">收货状态:</div>
<div class="r" style="left:1229.5px;top:404.0px;width:205.0px;height:29.0px;border:1.5px solid #a9a9a9;border-radius:3px;background:#fff;"></div>
<div class="t" style="left:1237.5px;top:401.5px;font-size:22px;line-height:35px;color:#111;font-weight:normal;width:161px;overflow:hidden;">--请选择--</div>
<svg class="r" style="left:1407.5px;top:412.5px;" width="18" height="11" viewBox="0 0 18 11"><path d="M1.5 1.5 L9 9 L16.5 1.5" fill="none" stroke="#222" stroke-width="2.2"/></svg>
<div class="t" style="left:1128.5px;top:459.0px;font-size:22px;line-height:35px;color:#333;font-weight:normal;">税率:</div>
<div class="r" style="left:1184.0px;top:458.0px;width:205.0px;height:37.0px;border:1.5px solid #a9a9a9;border-radius:3px;background:#fff;"></div>
<div class="t" style="left:1192.0px;top:459.5px;font-size:22px;line-height:35px;color:#111;font-weight:normal;width:161px;overflow:hidden;">--请选择税率--</div>
<svg class="r" style="left:1362.0px;top:470.5px;" width="18" height="11" viewBox="0 0 18 11"><path d="M1.5 1.5 L9 9 L16.5 1.5" fill="none" stroke="#222" stroke-width="2.2"/></svg>
<div class="t" style="left:1495.0px;top:350.5px;font-size:22px;line-height:35px;color:#333;font-weight:normal;">发料比例:</div>
<div class="r" style="left:1595.5px;top:349.5px;width:205.0px;height:28.5px;border:1.5px solid #a9a9a9;border-radius:3px;background:#fff;"></div>
<div class="t" style="left:1603.5px;top:346.8px;font-size:22px;line-height:35px;color:#111;font-weight:normal;width:161px;overflow:hidden;">--请选择--</div>
<svg class="r" style="left:1773.5px;top:357.8px;" width="18" height="11" viewBox="0 0 18 11"><path d="M1.5 1.5 L9 9 L16.5 1.5" fill="none" stroke="#222" stroke-width="2.2"/></svg>
<div class="t" style="left:1495.0px;top:405.0px;font-size:22px;line-height:35px;color:#333;font-weight:normal;">关联类型:</div>
<div class="r" style="left:1595.5px;top:404.5px;width:205.0px;height:28.5px;border:1.5px solid #a9a9a9;border-radius:3px;background:#fff;"></div>
<div class="t" style="left:1603.5px;top:401.8px;font-size:22px;line-height:35px;color:#111;font-weight:normal;width:161px;overflow:hidden;">全部</div>
<svg class="r" style="left:1773.5px;top:412.8px;" width="18" height="11" viewBox="0 0 18 11"><path d="M1.5 1.5 L9 9 L16.5 1.5" fill="none" stroke="#222" stroke-width="2.2"/></svg>
<div class="t" style="left:1495.0px;top:459.0px;font-size:22px;line-height:35px;color:#333;font-weight:normal;">备注:</div>
<div class="r" style="left:1550.0px;top:458.0px;width:206.0px;height:37.0px;border:1.5px solid #a9a9a9;border-radius:3px;background:#fff;"></div>
<div class="t" style="left:1861.5px;top:350.5px;font-size:22px;line-height:35px;color:#333;font-weight:normal;">订单状态:</div>
<div class="r" style="left:1961.5px;top:349.5px;width:205.0px;height:28.5px;border:1.5px solid #a9a9a9;border-radius:3px;background:#fff;"></div>
<div class="t" style="left:1969.5px;top:346.8px;font-size:22px;line-height:35px;color:#111;font-weight:normal;width:161px;overflow:hidden;">准备中+进行中</div>
<svg class="r" style="left:2139.5px;top:357.8px;" width="18" height="11" viewBox="0 0 18 11"><path d="M1.5 1.5 L9 9 L16.5 1.5" fill="none" stroke="#222" stroke-width="2.2"/></svg>
<div class="t" style="left:1861.5px;top:405.0px;font-size:22px;line-height:35px;color:#333;font-weight:normal;">关联单号:</div>
<div class="r" style="left:1961.5px;top:404.5px;width:205.0px;height:36.5px;border:1.5px solid #a9a9a9;border-radius:3px;background:#fff;"></div>
<div class="t" style="left:1865.0px;top:459.0px;font-size:22px;line-height:35px;color:#333;font-weight:normal;">下单日期:</div>
<div class="r" style="left:1965.5px;top:458.0px;width:149.0px;height:37.0px;border:1.5px solid #a9a9a9;border-radius:3px;background:#fff;"></div>
<div class="t" style="left:1974.5px;top:459.0px;font-size:22.5px;line-height:36px;color:#111;font-weight:normal;">2025-10-02</div>
<div class="t" style="left:2125.0px;top:460.0px;font-size:22px;line-height:35px;color:#333;font-weight:normal;">到</div>
<div class="r" style="left:2160.0px;top:458.0px;width:150.0px;height:37.0px;border:1.5px solid #a9a9a9;border-radius:3px;background:#fff;"></div>
<div class="t" style="left:2169.0px;top:459.0px;font-size:22.5px;line-height:36px;color:#111;font-weight:normal;">2026-03-31</div>
<div class="t" style="left:2227.5px;top:350.5px;font-size:22px;line-height:35px;color:#333;font-weight:normal;">产品规格:</div>
<div class="r" style="left:2327.5px;top:349.5px;width:206.5px;height:37.0px;border:1.5px solid #a9a9a9;border-radius:3px;background:#fff;"></div>
<div class="t" style="left:2227.5px;top:405.0px;font-size:22px;line-height:35px;color:#333;font-weight:normal;">委外单号:</div>
<div class="r" style="left:2327.5px;top:404.5px;width:206.5px;height:36.0px;border:1.5px solid #a9a9a9;border-radius:3px;background:#fff;"></div>
<div class="t" style="left:2368.5px;top:459.0px;font-size:22px;line-height:35px;color:#333;font-weight:normal;">交货日期:</div>
<div class="r" style="left:2468.5px;top:458.0px;width:149.0px;height:37.0px;border:1.5px solid #a9a9a9;border-radius:3px;background:#fff;"></div>
<div class="t" style="left:2628.0px;top:460.0px;font-size:22px;line-height:35px;color:#333;font-weight:normal;">到</div>
<div class="r" style="left:2663.5px;top:458.0px;width:149.0px;height:37.0px;border:1.5px solid #a9a9a9;border-radius:3px;background:#fff;"></div>
<div class="t" style="left:2594.5px;top:350.5px;font-size:22px;line-height:35px;color:#333;font-weight:normal;">委外类型:</div>
<div class="r" style="left:2694.8px;top:349.5px;width:205.0px;height:28.0px;border:1.5px solid #a9a9a9;border-radius:3px;background:#fff;"></div>
<div class="t" style="left:2702.8px;top:346.5px;font-size:22px;line-height:35px;color:#111;font-weight:normal;width:161px;overflow:hidden;">--请选择--</div>
<svg class="r" style="left:2872.8px;top:357.5px;" width="18" height="11" viewBox="0 0 18 11"><path d="M1.5 1.5 L9 9 L16.5 1.5" fill="none" stroke="#222" stroke-width="2.2"/></svg>
<div class="t" style="left:2594.5px;top:405.0px;font-size:22px;line-height:35px;color:#333;font-weight:normal;">委外数量:</div>
<div class="r" style="left:2694.8px;top:404.5px;width:92.0px;height:36.0px;border:1.5px solid #a9a9a9;border-radius:3px;background:#fff;"></div>
<div class="t" style="left:2793.0px;top:402.0px;font-size:22px;line-height:35px;color:#333;font-weight:normal;">-</div>
<div class="r" style="left:2807.5px;top:404.5px;width:93.0px;height:36.0px;border:1.5px solid #a9a9a9;border-radius:3px;background:#fff;"></div>
<div class="t" style="left:2866.5px;top:459.0px;font-size:22px;line-height:35px;color:#333;font-weight:normal;">标记:</div>
<div class="r" style="left:2922.5px;top:458.5px;width:206.0px;height:28.0px;border:1.5px solid #a9a9a9;border-radius:3px;background:#fff;"></div>
<div class="t" style="left:2930.5px;top:455.5px;font-size:22px;line-height:35px;color:#111;font-weight:normal;width:162px;overflow:hidden;">--请选择--</div>
<svg class="r" style="left:3101.5px;top:466.5px;" width="18" height="11" viewBox="0 0 18 11"><path d="M1.5 1.5 L9 9 L16.5 1.5" fill="none" stroke="#222" stroke-width="2.2"/></svg>
<div class="t" style="left:2959.5px;top:350.5px;font-size:22px;line-height:35px;color:#333;font-weight:normal;">物料状态:</div>
<div class="r" style="left:3060.7px;top:349.5px;width:205.0px;height:28.0px;border:1.5px solid #a9a9a9;border-radius:3px;background:#fff;"></div>
<div class="t" style="left:3068.7px;top:346.5px;font-size:22px;line-height:35px;color:#111;font-weight:normal;width:161px;overflow:hidden;">--请选择--</div>
<svg class="r" style="left:3238.7px;top:357.5px;" width="18" height="11" viewBox="0 0 18 11"><path d="M1.5 1.5 L9 9 L16.5 1.5" fill="none" stroke="#222" stroke-width="2.2"/></svg>
<div class="t" style="left:2959.5px;top:405.0px;font-size:22px;line-height:35px;color:#333;font-weight:normal;">委外单价:</div>
<div class="r" style="left:3060.7px;top:404.5px;width:93.0px;height:36.0px;border:1.5px solid #a9a9a9;border-radius:3px;background:#fff;"></div>
<div class="t" style="left:3160.0px;top:402.0px;font-size:22px;line-height:35px;color:#333;font-weight:normal;">-</div>
<div class="r" style="left:3174.3px;top:404.5px;width:92.5px;height:36.0px;border:1.5px solid #a9a9a9;border-radius:3px;background:#fff;"></div>
<div class="r" style="left:3431.5px;top:342.0px;width:113.0px;height:51.5px;border:1px solid #d8d8d8;border-radius:8px;background:#fff;"></div>
<svg class="r" style="left:3450.0px;top:355.0px;" width="28" height="28" viewBox="0 0 28 28"><circle cx="11" cy="11" r="8.5" fill="#dfeefb" stroke="#7aa6cf" stroke-width="2.2"/><path d="M17 17 L25 25" stroke="#e89a3c" stroke-width="4.5" stroke-linecap="round"/></svg>
<div class="t" style="left:3481.0px;top:350.5px;font-size:22.5px;line-height:36px;color:#555;font-weight:normal;">查询</div>
<div class="r" style="left:3570.0px;top:342.0px;width:114.0px;height:51.5px;border:1px solid #d8d8d8;border-radius:8px;background:#fff;"></div>
<svg class="r" style="left:3590.0px;top:352.0px;" width="30" height="34" viewBox="0 0 30 34"><path d="M6 2 H20 L27 9 V32 H6 Z" fill="#e8e8e8" stroke="#999" stroke-width="1.2"/><rect x="1" y="7" width="15" height="17" fill="#2e8b3e"/><path d="M4 10 L12 21 M12 10 L4 21" stroke="#fff" stroke-width="2"/><rect x="18" y="16" width="6" height="12" fill="#bbb"/></svg>
<div class="t" style="left:3621.0px;top:350.5px;font-size:22.5px;line-height:36px;color:#555;font-weight:normal;">导出</div>
<div class="r" style="left:3691.5px;top:350.0px;width:21.5px;height:22.0px;background:#1a73e8;border-radius:4px;"></div>
<svg class="r" style="left:3693.0px;top:352.0px;" width="18" height="18" viewBox="0 0 18 18"><path d="M3 9 L7.5 13.5 L15 4.5" fill="none" stroke="#fff" stroke-width="2.8"/></svg>
<div class="t" style="left:3714.0px;top:348.5px;font-size:22.5px;line-height:36px;color:#222;font-weight:normal;">高级</div>
<div class="r" style="left:367.0px;top:526.0px;width:3415.0px;height:57.5px;border:1.5px solid #d3dde8;background:linear-gradient(to bottom,#f8fafc 0%,#f6f9fb 44%,#cfe4f0 74%,#a0cae3 100%);"></div>
<div class="t" style="left:751.5px;width:400px;text-align:center;top:538.5px;font-size:22.5px;line-height:36px;color:#4a9ff0;font-weight:normal;">商品名称</div>
<div class="t" style="left:1557.8px;width:400px;text-align:center;top:538.5px;font-size:22.5px;line-height:36px;color:#4a9ff0;font-weight:normal;">数量及单价</div>
<div class="t" style="left:1977.8px;width:400px;text-align:center;top:538.5px;font-size:22.5px;line-height:36px;color:#4a9ff0;font-weight:normal;">交期/订单进度</div>
<div class="t" style="left:2400.8px;width:400px;text-align:center;top:538.5px;font-size:22.5px;line-height:36px;color:#4a9ff0;font-weight:normal;">订单状态</div>
<div class="t" style="left:2756.8px;width:400px;text-align:center;top:538.5px;font-size:22.5px;line-height:36px;color:#4a9ff0;font-weight:normal;">物料信息</div>
<div class="t" style="left:3013.8px;width:400px;text-align:center;top:538.5px;font-size:22.5px;line-height:36px;color:#4a9ff0;font-weight:normal;">成本/物料赔付金</div>
<div class="t" style="left:3271.7px;width:400px;text-align:center;top:538.5px;font-size:22.5px;line-height:36px;color:#4a9ff0;font-weight:normal;">备注</div>
<div class="t" style="left:3492.7px;width:400px;text-align:center;top:538.5px;font-size:22.5px;line-height:36px;color:#4a9ff0;font-weight:normal;">操作</div>
<div class="r" style="left:368.0px;top:592.0px;width:22.0px;height:22.0px;border:2px solid #767676;border-radius:4px;background:#fff;"></div>
<div class="t" style="left:397.0px;top:590.5px;font-size:22.5px;line-height:36px;color:#222;font-weight:normal;">全选</div>
<!--ORDERS-->
<div class="r" style="left:367.0px;top:621.5px;width:3415.0px;height:233.0px;border:1.5px solid #d3dbe4;background:#fff;"></div>
<div class="r" style="left:368.5px;top:623.0px;width:3412.0px;height:55.5px;background:#f2f2f2;"></div>
<div class="r" style="left:367.0px;top:678.0px;width:3415.0px;height:1.5px;background:#d3dbe4;"></div>
<div class="r" style="left:1535.2px;top:678.0px;width:1.5px;height:176.0px;background:#d3dbe4;"></div>
<div class="r" style="left:1978.8px;top:678.0px;width:1.5px;height:176.0px;background:#d3dbe4;"></div>
<div class="r" style="left:2375.2px;top:678.0px;width:1.5px;height:176.0px;background:#d3dbe4;"></div>
<div class="r" style="left:2824.8px;top:678.0px;width:1.5px;height:176.0px;background:#d3dbe4;"></div>
<div class="r" style="left:3087.2px;top:678.0px;width:1.5px;height:176.0px;background:#d3dbe4;"></div>
<div class="r" style="left:3338.9px;top:678.0px;width:1.5px;height:176.0px;background:#d3dbe4;"></div>
<div class="r" style="left:3602.9px;top:678.0px;width:1.5px;height:176.0px;background:#d3dbe4;"></div>
<div class="r" style="left:375.0px;top:640.0px;width:22.0px;height:22.0px;border:2px solid #767676;border-radius:4px;background:#fff;"></div>
<div class="t" style="left:413.0px;top:636.5px;font-size:24px;line-height:38px;color:#222;font-weight:bold;transform:scaleX(1.205);transform-origin:0 50%;">2026-03-11</div>
<div class="t" style="left:573.0px;top:637.5px;font-size:22.4px;line-height:36px;color:#222;font-weight:normal;">委外单号:00000156</div>
<svg class="r" style="left:1536.0px;top:638.0px;" width="31" height="30" viewBox="0 0 31 30"><path d="M3.3 1 H26.6 L29.5 9.5 A4.8 4.8 0 0 1 19.4 9.5 A4.5 4.5 0 0 1 10.3 9.5 A4.9 4.9 0 0 1 0.5 9.5 Z M10.3 4.5 V9.5 M19.4 4.5 V9.5 M3.7 18 V24.5 Q3.7 27.2 6.5 27.2 H23.2 Q26 27.2 26 24.5 V18" fill="none" stroke="#8a8a8a" stroke-width="1.8" stroke-linejoin="round"/></svg>
<div class="t" style="left:1566.0px;top:633.3px;font-size:22px;line-height:35px;color:#222;font-weight:normal;">荣仁加工厂</div>
<div class="t" style="left:2225.0px;width:600px;text-align:right;top:633.3px;font-size:22px;line-height:35px;color:#222;font-weight:normal;">下单人员:邱泽权</div>
<svg class="r" style="left:2982.0px;top:635.5px;" width="30" height="31" viewBox="0 0 30 31"><defs><linearGradient id="fp" x1="0" y1="0" x2="1" y2="0"><stop offset="0" stop-color="#4d8fdc"/><stop offset="0.5" stop-color="#6fb0f0"/><stop offset="1" stop-color="#8cc8fa"/></linearGradient></defs><rect x="1" y="1" width="28" height="29" rx="3" fill="url(#fp)"/><rect x="6" y="1.5" width="19" height="14" fill="#fafafa"/><rect x="6" y="1.5" width="19" height="3" fill="#f08a30"/><path d="M7 8.5 H24 M7 12 H24" stroke="#dde4ea" stroke-width="1"/><rect x="7" y="20" width="16" height="9" fill="#c8d4dc"/><ellipse cx="12" cy="24.5" rx="1.8" ry="2.8" fill="#2a5aa0"/></svg>
<div class="r" style="left:3024.0px;top:636.5px;width:50.0px;height:27.5px;border:1px solid #777;border-radius:3px;background:#f2f2f2;"></div>
<div class="t" style="left:3026.5px;top:633.3px;font-size:22px;line-height:35px;color:#111;font-weight:normal;">文件</div>
<div class="t" style="left:3079.0px;top:633.3px;font-size:22px;line-height:35px;color:#222;font-weight:normal;">(0)</div>
<svg class="r" style="left:3130.0px;top:638.5px;" width="34" height="26.5" viewBox="0 0 34 26.5"><defs><linearGradient id="sk" x1="0" y1="0" x2="0" y2="1"><stop offset="0" stop-color="#3e8ee0"/><stop offset="0.6" stop-color="#f4f8fb"/></linearGradient><linearGradient id="hl" x1="0" y1="0" x2="0" y2="1"><stop offset="0" stop-color="#5ab85a"/><stop offset="1" stop-color="#158a20"/></linearGradient></defs><rect x="0" y="0" width="34" height="26.5" fill="#8a8e94"/><rect x="2" y="2" width="30" height="21" fill="url(#sk)"/><path d="M2 23 V19 Q8 17 12 14 Q17 10 22 13 Q27 16 32 17 V23 Z" fill="url(#hl)"/><circle cx="27" cy="6" r="1.8" fill="#f5a030"/><rect x="0" y="24" width="34" height="2.5" fill="#9a96a8"/></svg>
<div class="r" style="left:3174.0px;top:636.5px;width:50.0px;height:27.5px;border:1px solid #777;border-radius:3px;background:#f2f2f2;"></div>
<div class="t" style="left:3176.5px;top:633.3px;font-size:22px;line-height:35px;color:#111;font-weight:normal;">图片</div>
<div class="t" style="left:3229.0px;top:633.3px;font-size:22px;line-height:35px;color:#222;font-weight:normal;">(0)</div>
<svg class="r" style="left:3609.0px;top:634.5px;" width="30" height="30" viewBox="0 0 30 30"><rect x="1" y="1" width="15" height="21" fill="#e6e9f0" stroke="#c8c8c8" stroke-width="1"/><path d="M10 7 H23 L28 12 V29 H10 Z" fill="#e8ecf6" stroke="#aaa" stroke-width="1.2"/></svg>
<svg class="r" style="left:3651.5px;top:634.5px;" width="29" height="30" viewBox="0 0 29 30"><rect x="7" y="1" width="15" height="10" fill="#dfeeee" stroke="#9ab" stroke-width="1"/><rect x="1" y="9" width="27" height="12" rx="3" fill="#c8c8cc" stroke="#999" stroke-width="1"/><rect x="6" y="11" width="17" height="6" fill="#333"/><rect x="7" y="18" width="15" height="4" fill="#f4f4f4" stroke="#999" stroke-width="0.8"/><ellipse cx="14.5" cy="27" rx="13" ry="2" fill="#444"/><rect x="11" y="25" width="7" height="4" rx="1.5" fill="#3dba4e"/><rect x="13.8" y="21" width="1.4" height="5" fill="#888"/><circle cx="23" cy="12" r="1.2" fill="#3dba4e"/></svg>
<div class="r" style="left:3687.0px;top:636.5px;width:56.5px;height:25.5px;background:#efefef;"></div>
<svg class="r" style="left:3709.0px;top:645.5px;" width="13" height="8" viewBox="0 0 13 8"><path d="M0 0 L13 0 L6.5 8 Z" fill="#222"/></svg>
<div class="r" style="left:367.5px;top:707.0px;width:112.5px;height:112.0px;background:#e0e0e0;"></div>
<div class="t" style="left:387.5px;top:729.0px;font-size:29px;line-height:36px;color:#c4c4c4;font-family:Liberation Serif,serif;letter-spacing:8px">暂无</div>
<div class="t" style="left:387.5px;top:763.0px;font-size:29px;line-height:36px;color:#c4c4c4;font-family:Liberation Serif,serif;letter-spacing:8px">图片</div>
<div class="t" style="left:481.0px;top:678.0px;font-size:22px;line-height:35px;color:#222;font-weight:normal;">任务单号<span class="fc">:</span>00000156 <span class="fl">(</span><span style="color:#2a4aa8">产品委外</span><span class="fr">)</span></div>
<div class="t" style="left:481.0px;top:708.0px;font-size:22px;line-height:35px;color:#222;font-weight:normal;">[DZ00000200]接触件端子</div>
<div class="t" style="left:1549.0px;top:679.5px;font-size:22px;line-height:35px;color:#222;font-weight:normal;"><b style="font-size:22px">2050</b> <span style="font-size:20.5px">PCS&nbsp; × 0.5元 = 1,025元</span></div>
<div class="t" style="left:1549.0px;top:709.5px;font-size:22px;line-height:35px;color:#222;font-weight:normal;">月结&nbsp;&nbsp; 税率:0%</div>
<div class="t" style="left:1990.0px;top:681.0px;font-size:22.3px;line-height:36px;color:#222;font-weight:normal;">交期<span class="fc">:</span>2026-03-11</div>
<div class="t" style="left:1990.0px;top:711.0px;font-size:22.3px;line-height:36px;color:#222;font-weight:normal;">已收货<span class="fc">:</span>0&nbsp;&nbsp;&nbsp;&nbsp; 未收货<span class="fc">:</span>2050</div>
<div class="t" style="left:1990.0px;top:741.0px;font-size:22.3px;line-height:36px;color:#222;font-weight:normal;">良品退货<span class="fc">:</span>0&nbsp;&nbsp;&nbsp;&nbsp; 不良退货<span class="fc">:</span>0</div>
<div class="t" style="left:1990.0px;top:771.0px;font-size:22.3px;line-height:36px;color:#222;font-weight:normal;">良品数<span class="fc">:</span>0 不良数<span class="fc">:</span>0</div>
<div class="r" style="left:1990.5px;top:802.0px;width:280.5px;height:41.5px;border:1.5px solid #8fb4e6;border-radius:8px;background:#fff;overflow:hidden;"></div>
<div class="t" style="left:1990.5px;width:280px;text-align:center;top:805.5px;font-size:22.5px;line-height:36px;color:#111;font-weight:normal;">0%</div>
<div class="t" style="left:2389.0px;top:681.5px;font-size:22px;line-height:35px;color:#222;font-weight:normal;">订单审核<span class="fc">:</span><span style="color:#2aa02a">已审核</span></div>
<div class="t" style="left:2389.0px;top:711.5px;font-size:22px;line-height:35px;color:#222;font-weight:normal;">订单状态<span class="fc">:</span><span style="color:#777">进行中</span></div>
<div class="t" style="left:2389.0px;top:741.5px;font-size:22px;line-height:35px;color:#222;font-weight:normal;">负&nbsp; 责&nbsp; 人<span class="fc">:</span><span style="color:#777">邱泽权</span></div>
<div class="t" style="left:2389.0px;top:771.5px;font-size:22px;line-height:35px;color:#222;font-weight:normal;">生产需求:ldb-bc-p--4971</div>
<div class="t" style="left:2832.0px;top:676.5px;font-size:22.5px;line-height:36px;color:#222;font-weight:normal;">物料状态<span class="fc">:</span><span style="color:#2aa02a">已审核</span></div>
<div class="t" style="left:2832.0px;top:706.5px;font-size:22.5px;line-height:36px;color:#222;font-weight:normal;">发料数量<span class="fc">:</span>0(0%)</div>
<div class="t" style="left:2832.0px;top:736.5px;font-size:22.5px;line-height:36px;color:#222;font-weight:normal;">领料数量<span class="fc">:</span>0(0%)</div>
<div class="t" style="left:3088.8px;width:250px;text-align:center;top:695.5px;font-size:22.5px;line-height:36px;color:#222;font-weight:normal;">￥0</div>
<div class="t" style="left:3088.8px;width:250px;text-align:center;top:725.5px;font-size:22.5px;line-height:36px;color:#222;font-weight:normal;">￥0</div>
<svg class="r" style="left:3611.0px;top:680.5px;" width="28" height="29" viewBox="0 0 28 29"><g fill="none" stroke="#444" stroke-width="2.8"><rect x="2" y="2" width="10" height="10"/><rect x="17" y="2" width="10" height="10"/><rect x="2" y="17" width="10" height="10"/></g><g fill="#444"><rect x="5.5" y="5.5" width="3" height="3"/><rect x="20.5" y="5.5" width="3" height="3"/><rect x="5.5" y="20.5" width="3" height="3"/><rect x="16" y="16" width="4" height="4"/><rect x="23" y="16" width="5" height="4"/><rect x="19" y="20" width="4" height="4"/><rect x="16" y="24" width="4" height="4"/><rect x="23" y="23" width="5" height="5"/></g></svg>
<svg class="r" style="left:3658.5px;top:680.0px;" width="29" height="30" viewBox="0 0 29 30"><rect x="7" y="1" width="15" height="10" fill="#dfeeee" stroke="#9ab" stroke-width="1"/><rect x="1" y="9" width="27" height="12" rx="3" fill="#c8c8cc" stroke="#999" stroke-width="1"/><rect x="6" y="11" width="17" height="6" fill="#333"/><rect x="7" y="18" width="15" height="4" fill="#f4f4f4" stroke="#999" stroke-width="0.8"/><ellipse cx="14.5" cy="27" rx="13" ry="2" fill="#444"/><rect x="11" y="25" width="7" height="4" rx="1.5" fill="#3dba4e"/><rect x="13.8" y="21" width="1.4" height="5" fill="#888"/><circle cx="23" cy="12" r="1.2" fill="#3dba4e"/></svg>
<svg class="r" style="left:3707.0px;top:679.5px;" width="26" height="30" viewBox="0 0 26 30"><path d="M3.5 1.2 H16 L22.8 8 V28.2 H3.5 Z" fill="#fff" stroke="#111" stroke-width="2.4"/><path d="M16 1 V8 H23 Z" fill="#111"/><rect x="0.5" y="10.3" width="25" height="11" rx="2.5" fill="#111"/><text x="13" y="19.6" font-size="9.6" font-weight="bold" text-anchor="middle" fill="#fff" font-family="Liberation Sans">LOG</text></svg>
<svg class="r" style="left:3751.5px;top:683.0px;" width="22" height="22" viewBox="0 0 22 22"><rect x="0" y="0" width="2.5" height="22" fill="#777"/><path d="M3 2 Q8 0 12 2 Q17 4 21 2 V13 Q17 15 12 13 Q8 11 3 13 Z" fill="#888"/></svg>
<div class="r" style="left:3646.0px;top:727.5px;width:93.0px;height:52.0px;background:#e6e6e6;"></div>
<div class="t" style="left:3669.0px;top:736.0px;font-size:22.5px;line-height:36px;color:#333;font-weight:normal;">操作</div>
<svg class="r" style="left:3715.0px;top:749.5px;" width="13" height="8" viewBox="0 0 13 8"><path d="M0 0 L13 0 L6.5 8 Z" fill="#333"/></svg>
<div class="r" style="left:367.0px;top:877.5px;width:3415.0px;height:233.0px;border:1.5px solid #d3dbe4;background:#fff;"></div>
<div class="r" style="left:368.5px;top:879.0px;width:3412.0px;height:55.5px;background:#f2f2f2;"></div>
<div class="r" style="left:367.0px;top:934.0px;width:3415.0px;height:1.5px;background:#d3dbe4;"></div>
<div class="r" style="left:1535.2px;top:934.0px;width:1.5px;height:176.0px;background:#d3dbe4;"></div>
<div class="r" style="left:1978.8px;top:934.0px;width:1.5px;height:176.0px;background:#d3dbe4;"></div>
<div class="r" style="left:2375.2px;top:934.0px;width:1.5px;height:176.0px;background:#d3dbe4;"></div>
<div class="r" style="left:2824.8px;top:934.0px;width:1.5px;height:176.0px;background:#d3dbe4;"></div>
<div class="r" style="left:3087.2px;top:934.0px;width:1.5px;height:176.0px;background:#d3dbe4;"></div>
<div class="r" style="left:3338.9px;top:934.0px;width:1.5px;height:176.0px;background:#d3dbe4;"></div>
<div class="r" style="left:3602.9px;top:934.0px;width:1.5px;height:176.0px;background:#d3dbe4;"></div>
<div class="r" style="left:375.0px;top:896.0px;width:22.0px;height:22.0px;border:2px solid #767676;border-radius:4px;background:#fff;"></div>
<div class="t" style="left:413.0px;top:892.5px;font-size:24px;line-height:38px;color:#222;font-weight:bold;transform:scaleX(1.205);transform-origin:0 50%;">2026-03-09</div>
<div class="t" style="left:573.0px;top:893.5px;font-size:22.4px;line-height:36px;color:#222;font-weight:normal;">委外单号:00000154</div>
<svg class="r" style="left:1536.0px;top:894.0px;" width="31" height="30" viewBox="0 0 31 30"><path d="M3.3 1 H26.6 L29.5 9.5 A4.8 4.8 0 0 1 19.4 9.5 A4.5 4.5 0 0 1 10.3 9.5 A4.9 4.9 0 0 1 0.5 9.5 Z M10.3 4.5 V9.5 M19.4 4.5 V9.5 M3.7 18 V24.5 Q3.7 27.2 6.5 27.2 H23.2 Q26 27.2 26 24.5 V18" fill="none" stroke="#8a8a8a" stroke-width="1.8" stroke-linejoin="round"/></svg>
<div class="t" style="left:1566.0px;top:889.3px;font-size:22px;line-height:35px;color:#222;font-weight:normal;">益龙达贴片厂</div>
<div class="t" style="left:2225.0px;width:600px;text-align:right;top:889.3px;font-size:22px;line-height:35px;color:#222;font-weight:normal;">下单人员:邱泽权</div>
<svg class="r" style="left:2982.0px;top:891.5px;" width="30" height="31" viewBox="0 0 30 31"><defs><linearGradient id="fp" x1="0" y1="0" x2="1" y2="0"><stop offset="0" stop-color="#4d8fdc"/><stop offset="0.5" stop-color="#6fb0f0"/><stop offset="1" stop-color="#8cc8fa"/></linearGradient></defs><rect x="1" y="1" width="28" height="29" rx="3" fill="url(#fp)"/><rect x="6" y="1.5" width="19" height="14" fill="#fafafa"/><rect x="6" y="1.5" width="19" height="3" fill="#f08a30"/><path d="M7 8.5 H24 M7 12 H24" stroke="#dde4ea" stroke-width="1"/><rect x="7" y="20" width="16" height="9" fill="#c8d4dc"/><ellipse cx="12" cy="24.5" rx="1.8" ry="2.8" fill="#2a5aa0"/></svg>
<div class="r" style="left:3024.0px;top:892.5px;width:50.0px;height:27.5px;border:1px solid #777;border-radius:3px;background:#f2f2f2;"></div>
<div class="t" style="left:3026.5px;top:889.3px;font-size:22px;line-height:35px;color:#111;font-weight:normal;">文件</div>
<div class="t" style="left:3079.0px;top:889.3px;font-size:22px;line-height:35px;color:#222;font-weight:normal;">(0)</div>
<svg class="r" style="left:3130.0px;top:894.5px;" width="34" height="26.5" viewBox="0 0 34 26.5"><defs><linearGradient id="sk" x1="0" y1="0" x2="0" y2="1"><stop offset="0" stop-color="#3e8ee0"/><stop offset="0.6" stop-color="#f4f8fb"/></linearGradient><linearGradient id="hl" x1="0" y1="0" x2="0" y2="1"><stop offset="0" stop-color="#5ab85a"/><stop offset="1" stop-color="#158a20"/></linearGradient></defs><rect x="0" y="0" width="34" height="26.5" fill="#8a8e94"/><rect x="2" y="2" width="30" height="21" fill="url(#sk)"/><path d="M2 23 V19 Q8 17 12 14 Q17 10 22 13 Q27 16 32 17 V23 Z" fill="url(#hl)"/><circle cx="27" cy="6" r="1.8" fill="#f5a030"/><rect x="0" y="24" width="34" height="2.5" fill="#9a96a8"/></svg>
<div class="r" style="left:3174.0px;top:892.5px;width:50.0px;height:27.5px;border:1px solid #777;border-radius:3px;background:#f2f2f2;"></div>
<div class="t" style="left:3176.5px;top:889.3px;font-size:22px;line-height:35px;color:#111;font-weight:normal;">图片</div>
<div class="t" style="left:3229.0px;top:889.3px;font-size:22px;line-height:35px;color:#222;font-weight:normal;">(0)</div>
<svg class="r" style="left:3651.5px;top:890.5px;" width="29" height="30" viewBox="0 0 29 30"><rect x="7" y="1" width="15" height="10" fill="#dfeeee" stroke="#9ab" stroke-width="1"/><rect x="1" y="9" width="27" height="12" rx="3" fill="#c8c8cc" stroke="#999" stroke-width="1"/><rect x="6" y="11" width="17" height="6" fill="#333"/><rect x="7" y="18" width="15" height="4" fill="#f4f4f4" stroke="#999" stroke-width="0.8"/><ellipse cx="14.5" cy="27" rx="13" ry="2" fill="#444"/><rect x="11" y="25" width="7" height="4" rx="1.5" fill="#3dba4e"/><rect x="13.8" y="21" width="1.4" height="5" fill="#888"/><circle cx="23" cy="12" r="1.2" fill="#3dba4e"/></svg>
<div class="r" style="left:3687.0px;top:892.5px;width:56.5px;height:25.5px;background:#efefef;"></div>
<svg class="r" style="left:3709.0px;top:901.5px;" width="13" height="8" viewBox="0 0 13 8"><path d="M0 0 L13 0 L6.5 8 Z" fill="#222"/></svg>
<svg class="r" style="left:368.0px;top:992.0px;" width="112" height="55" viewBox="0 0 112 55"><defs><filter id="bs" x="0" y="0" width="1" height="1"><feGaussianBlur stdDeviation="0.6"/></filter></defs><g filter="url(#bs)"><rect width="112" height="55" fill="#b6b6b6"/>
<rect x="0" y="0" width="112" height="2" fill="#f0f4f6"/><rect x="0" y="2" width="112" height="4" fill="#2f80b8"/><rect x="94" y="0" width="18" height="5" fill="#4aa8e8"/><rect x="0" y="6" width="112" height="2.5" fill="#dcdcdc"/>
<rect x="0" y="8.5" width="11" height="46" fill="#d4d4d4"/><rect x="0" y="21" width="11" height="4" fill="#3a8ac4"/><rect x="0" y="38" width="11" height="17" fill="#3a8cc6"/>
<rect x="11" y="8.5" width="3" height="46" fill="#e8ecf0"/><rect x="14" y="8.5" width="11" height="46" fill="#f6f8fa"/><rect x="12" y="10" width="12" height="1.2" fill="#f0c850"/>
<rect x="25" y="8.5" width="87" height="45" fill="#b0b0b0"/><rect x="33" y="10" width="70" height="36" fill="#fff"/><rect x="33" y="10" width="70" height="2" fill="#f2f2f2"/><rect x="54" y="13" width="13" height="3" fill="#88c2f4"/><rect x="0" y="53" width="112" height="2" fill="#2f7fb5"/></g></svg>
<div class="t" style="left:481.0px;top:934.0px;font-size:22px;line-height:35px;color:#222;font-weight:normal;">任务单号<span class="fc">:</span>00000154 <span class="fl">(</span><span style="color:#f39c12">工序委外</span><span class="fr">)</span></div>
<div class="t" style="left:481.0px;top:964.0px;font-size:22px;line-height:35px;color:#222;font-weight:normal;">[331-01B]底座前面板</div>
<div class="t" style="left:484.0px;top:1009.0px;font-size:22px;line-height:35px;color:#222;font-weight:normal;">AZ91D黑色</div>
<div class="t" style="left:1549.0px;top:935.5px;font-size:22px;line-height:35px;color:#222;font-weight:normal;"><b style="font-size:22px">224</b> <span style="font-size:20.5px">PCS&nbsp; × 5元 = 1,120元</span></div>
<div class="t" style="left:1549.0px;top:965.5px;font-size:22px;line-height:35px;color:#222;font-weight:normal;">月结&nbsp;&nbsp; 税率:0%</div>
<div class="t" style="left:1549.0px;top:995.5px;font-size:22px;line-height:35px;color:#222;font-weight:normal;">工序<span class="fc">:</span>&nbsp;(喷涂)</div>
<div class="t" style="left:1990.0px;top:937.0px;font-size:22.3px;line-height:36px;color:#222;font-weight:normal;">交期<span class="fc">:</span>2026-03-16</div>
<div class="t" style="left:1990.0px;top:967.0px;font-size:22.3px;line-height:36px;color:#222;font-weight:normal;">已收货<span class="fc">:</span>220&nbsp;&nbsp;&nbsp;&nbsp; 未收货<span class="fc">:</span>4</div>
<div class="t" style="left:1990.0px;top:997.0px;font-size:22.3px;line-height:36px;color:#222;font-weight:normal;">良品退货<span class="fc">:</span>0&nbsp;&nbsp;&nbsp;&nbsp; 不良退货<span class="fc">:</span>0</div>
<div class="t" style="left:1990.0px;top:1027.0px;font-size:22.3px;line-height:36px;color:#222;font-weight:normal;">良品数<span class="fc">:</span>220 不良数<span class="fc">:</span>0</div>
<div class="r" style="left:1990.5px;top:1058.0px;width:280.5px;height:41.5px;border:1.5px solid #8fb4e6;border-radius:8px;background:#fff;overflow:hidden;"></div>
<div class="r" style="left:1992.0px;top:1059.5px;width:271.0px;height:38.5px;background:#ffe08c;border-radius:6px 0 0 6px;"></div>
<div class="t" style="left:1990.5px;width:280px;text-align:center;top:1061.5px;font-size:22.5px;line-height:36px;color:#111;font-weight:normal;">98.21%</div>
<div class="t" style="left:2389.0px;top:937.5px;font-size:22px;line-height:35px;color:#222;font-weight:normal;">订单审核<span class="fc">:</span><span style="color:#2aa02a">已审核</span></div>
<div class="t" style="left:2389.0px;top:967.5px;font-size:22px;line-height:35px;color:#222;font-weight:normal;">订单状态<span class="fc">:</span><span style="color:#777">进行中</span></div>
<div class="t" style="left:2389.0px;top:997.5px;font-size:22px;line-height:35px;color:#222;font-weight:normal;">负&nbsp; 责&nbsp; 人<span class="fc">:</span><span style="color:#777">邱泽权</span></div>
<div class="t" style="left:2389.0px;top:1027.5px;font-size:22px;line-height:35px;color:#222;font-weight:normal;">生产单号<span class="fc">:</span><span style="color:#777">hzx202603090001-1</span></div>
<div class="t" style="left:2832.0px;top:932.5px;font-size:22.5px;line-height:36px;color:#222;font-weight:normal;">物料状态<span class="fc">:</span><span style="color:#2aa02a">已审核</span></div>
<div class="t" style="left:2832.0px;top:962.5px;font-size:22.5px;line-height:36px;color:#222;font-weight:normal;">发料数量<span class="fc">:</span>0(0%)</div>
<div class="t" style="left:2832.0px;top:992.5px;font-size:22.5px;line-height:36px;color:#222;font-weight:normal;">领料数量<span class="fc">:</span>0(0%)</div>
<div class="t" style="left:3088.8px;width:250px;text-align:center;top:951.5px;font-size:22.5px;line-height:36px;color:#222;font-weight:normal;">￥1,100</div>
<div class="t" style="left:3088.8px;width:250px;text-align:center;top:981.5px;font-size:22.5px;line-height:36px;color:#222;font-weight:normal;">￥0</div>
<svg class="r" style="left:3611.0px;top:936.5px;" width="28" height="29" viewBox="0 0 28 29"><g fill="none" stroke="#444" stroke-width="2.8"><rect x="2" y="2" width="10" height="10"/><rect x="17" y="2" width="10" height="10"/><rect x="2" y="17" width="10" height="10"/></g><g fill="#444"><rect x="5.5" y="5.5" width="3" height="3"/><rect x="20.5" y="5.5" width="3" height="3"/><rect x="5.5" y="20.5" width="3" height="3"/><rect x="16" y="16" width="4" height="4"/><rect x="23" y="16" width="5" height="4"/><rect x="19" y="20" width="4" height="4"/><rect x="16" y="24" width="4" height="4"/><rect x="23" y="23" width="5" height="5"/></g></svg>
<svg class="r" style="left:3658.5px;top:936.0px;" width="29" height="30" viewBox="0 0 29 30"><rect x="7" y="1" width="15" height="10" fill="#dfeeee" stroke="#9ab" stroke-width="1"/><rect x="1" y="9" width="27" height="12" rx="3" fill="#c8c8cc" stroke="#999" stroke-width="1"/><rect x="6" y="11" width="17" height="6" fill="#333"/><rect x="7" y="18" width="15" height="4" fill="#f4f4f4" stroke="#999" stroke-width="0.8"/><ellipse cx="14.5" cy="27" rx="13" ry="2" fill="#444"/><rect x="11" y="25" width="7" height="4" rx="1.5" fill="#3dba4e"/><rect x="13.8" y="21" width="1.4" height="5" fill="#888"/><circle cx="23" cy="12" r="1.2" fill="#3dba4e"/></svg>
<svg class="r" style="left:3707.0px;top:935.5px;" width="26" height="30" viewBox="0 0 26 30"><path d="M3.5 1.2 H16 L22.8 8 V28.2 H3.5 Z" fill="#fff" stroke="#111" stroke-width="2.4"/><path d="M16 1 V8 H23 Z" fill="#111"/><rect x="0.5" y="10.3" width="25" height="11" rx="2.5" fill="#111"/><text x="13" y="19.6" font-size="9.6" font-weight="bold" text-anchor="middle" fill="#fff" font-family="Liberation Sans">LOG</text></svg>
<svg class="r" style="left:3751.5px;top:939.0px;" width="22" height="22" viewBox="0 0 22 22"><rect x="0" y="0" width="2.5" height="22" fill="#777"/><path d="M3 2 Q8 0 12 2 Q17 4 21 2 V13 Q17 15 12 13 Q8 11 3 13 Z" fill="#888"/></svg>
<div class="r" style="left:3646.0px;top:983.5px;width:93.0px;height:52.0px;background:#e6e6e6;"></div>
<div class="t" style="left:3669.0px;top:992.0px;font-size:22.5px;line-height:36px;color:#333;font-weight:normal;">操作</div>
<svg class="r" style="left:3715.0px;top:1005.5px;" width="13" height="8" viewBox="0 0 13 8"><path d="M0 0 L13 0 L6.5 8 Z" fill="#333"/></svg>
<div class="r" style="left:367.0px;top:1133.5px;width:3415.0px;height:233.0px;border:1.5px solid #d3dbe4;background:#fff;"></div>
<div class="r" style="left:368.5px;top:1135.0px;width:3412.0px;height:55.5px;background:#f2f2f2;"></div>
<div class="r" style="left:367.0px;top:1190.0px;width:3415.0px;height:1.5px;background:#d3dbe4;"></div>
<div class="r" style="left:1535.2px;top:1190.0px;width:1.5px;height:176.0px;background:#d3dbe4;"></div>
<div class="r" style="left:1978.8px;top:1190.0px;width:1.5px;height:176.0px;background:#d3dbe4;"></div>
<div class="r" style="left:2375.2px;top:1190.0px;width:1.5px;height:176.0px;background:#d3dbe4;"></div>
<div class="r" style="left:2824.8px;top:1190.0px;width:1.5px;height:176.0px;background:#d3dbe4;"></div>
<div class="r" style="left:3087.2px;top:1190.0px;width:1.5px;height:176.0px;background:#d3dbe4;"></div>
<div class="r" style="left:3338.9px;top:1190.0px;width:1.5px;height:176.0px;background:#d3dbe4;"></div>
<div class="r" style="left:3602.9px;top:1190.0px;width:1.5px;height:176.0px;background:#d3dbe4;"></div>
<div class="r" style="left:375.0px;top:1152.0px;width:22.0px;height:22.0px;border:2px solid #767676;border-radius:4px;background:#fff;"></div>
<div class="t" style="left:413.0px;top:1148.5px;font-size:24px;line-height:38px;color:#222;font-weight:bold;transform:scaleX(1.205);transform-origin:0 50%;">2026-03-08</div>
<div class="t" style="left:573.0px;top:1149.5px;font-size:22.4px;line-height:36px;color:#222;font-weight:normal;">委外单号:00000153</div>
<svg class="r" style="left:1536.0px;top:1150.0px;" width="31" height="30" viewBox="0 0 31 30"><path d="M3.3 1 H26.6 L29.5 9.5 A4.8 4.8 0 0 1 19.4 9.5 A4.5 4.5 0 0 1 10.3 9.5 A4.9 4.9 0 0 1 0.5 9.5 Z M10.3 4.5 V9.5 M19.4 4.5 V9.5 M3.7 18 V24.5 Q3.7 27.2 6.5 27.2 H23.2 Q26 27.2 26 24.5 V18" fill="none" stroke="#8a8a8a" stroke-width="1.8" stroke-linejoin="round"/></svg>
<div class="t" style="left:1566.0px;top:1145.3px;font-size:22px;line-height:35px;color:#222;font-weight:normal;">荣仁加工厂</div>
<div class="t" style="left:2225.0px;width:600px;text-align:right;top:1145.3px;font-size:22px;line-height:35px;color:#222;font-weight:normal;">下单人员:邱泽权</div>
<svg class="r" style="left:2982.0px;top:1147.5px;" width="30" height="31" viewBox="0 0 30 31"><defs><linearGradient id="fp" x1="0" y1="0" x2="1" y2="0"><stop offset="0" stop-color="#4d8fdc"/><stop offset="0.5" stop-color="#6fb0f0"/><stop offset="1" stop-color="#8cc8fa"/></linearGradient></defs><rect x="1" y="1" width="28" height="29" rx="3" fill="url(#fp)"/><rect x="6" y="1.5" width="19" height="14" fill="#fafafa"/><rect x="6" y="1.5" width="19" height="3" fill="#f08a30"/><path d="M7 8.5 H24 M7 12 H24" stroke="#dde4ea" stroke-width="1"/><rect x="7" y="20" width="16" height="9" fill="#c8d4dc"/><ellipse cx="12" cy="24.5" rx="1.8" ry="2.8" fill="#2a5aa0"/></svg>
<div class="r" style="left:3024.0px;top:1148.5px;width:50.0px;height:27.5px;border:1px solid #777;border-radius:3px;background:#f2f2f2;"></div>
<div class="t" style="left:3026.5px;top:1145.3px;font-size:22px;line-height:35px;color:#111;font-weight:normal;">文件</div>
<div class="t" style="left:3079.0px;top:1145.3px;font-size:22px;line-height:35px;color:#222;font-weight:normal;">(0)</div>
<svg class="r" style="left:3130.0px;top:1150.5px;" width="34" height="26.5" viewBox="0 0 34 26.5"><defs><linearGradient id="sk" x1="0" y1="0" x2="0" y2="1"><stop offset="0" stop-color="#3e8ee0"/><stop offset="0.6" stop-color="#f4f8fb"/></linearGradient><linearGradient id="hl" x1="0" y1="0" x2="0" y2="1"><stop offset="0" stop-color="#5ab85a"/><stop offset="1" stop-color="#158a20"/></linearGradient></defs><rect x="0" y="0" width="34" height="26.5" fill="#8a8e94"/><rect x="2" y="2" width="30" height="21" fill="url(#sk)"/><path d="M2 23 V19 Q8 17 12 14 Q17 10 22 13 Q27 16 32 17 V23 Z" fill="url(#hl)"/><circle cx="27" cy="6" r="1.8" fill="#f5a030"/><rect x="0" y="24" width="34" height="2.5" fill="#9a96a8"/></svg>
<div class="r" style="left:3174.0px;top:1148.5px;width:50.0px;height:27.5px;border:1px solid #777;border-radius:3px;background:#f2f2f2;"></div>
<div class="t" style="left:3176.5px;top:1145.3px;font-size:22px;line-height:35px;color:#111;font-weight:normal;">图片</div>
<div class="t" style="left:3229.0px;top:1145.3px;font-size:22px;line-height:35px;color:#222;font-weight:normal;">(0)</div>
<svg class="r" style="left:3651.5px;top:1146.5px;" width="29" height="30" viewBox="0 0 29 30"><rect x="7" y="1" width="15" height="10" fill="#dfeeee" stroke="#9ab" stroke-width="1"/><rect x="1" y="9" width="27" height="12" rx="3" fill="#c8c8cc" stroke="#999" stroke-width="1"/><rect x="6" y="11" width="17" height="6" fill="#333"/><rect x="7" y="18" width="15" height="4" fill="#f4f4f4" stroke="#999" stroke-width="0.8"/><ellipse cx="14.5" cy="27" rx="13" ry="2" fill="#444"/><rect x="11" y="25" width="7" height="4" rx="1.5" fill="#3dba4e"/><rect x="13.8" y="21" width="1.4" height="5" fill="#888"/><circle cx="23" cy="12" r="1.2" fill="#3dba4e"/></svg>
<div class="r" style="left:3687.0px;top:1148.5px;width:56.5px;height:25.5px;background:#efefef;"></div>
<svg class="r" style="left:3709.0px;top:1157.5px;" width="13" height="8" viewBox="0 0 13 8"><path d="M0 0 L13 0 L6.5 8 Z" fill="#222"/></svg>
<svg class="r" style="left:372.0px;top:1219.5px;" width="105" height="112" viewBox="0 0 105 112"><defs><radialGradient id="fg" cx="52%" cy="0%" r="95%"><stop offset="0" stop-color="#9a9a9a"/><stop offset="0.35" stop-color="#3a3a3a"/><stop offset="1" stop-color="#0a0a0a"/></radialGradient><filter id="fb" x="0" y="0" width="1" height="1"><feGaussianBlur stdDeviation="0.9"/></filter></defs>
<rect width="105" height="112" fill="url(#fg)"/><g filter="url(#fb)">
<path d="M0 56 Q8 50 18 54 Q28 48 34 56 Q42 52 50 60 L50 72 L0 72 Z" fill="#3c9a2c"/>
<path d="M0 68 L28 68 L30 94 L0 94 Z" fill="#b8b8b8"/><path d="M36 74 Q46 68 58 76 L58 96 L36 96 Z" fill="#c8c8c8"/>
<path d="M0 88 Q40 84 105 96 V112 H0 Z" fill="#8a8c8e"/><path d="M4 98 Q50 90 72 106 L72 112 L4 112 Z" fill="#4a4c4e"/>
<ellipse cx="31" cy="110" rx="9" ry="4" fill="#d8b440"/><ellipse cx="12" cy="106" rx="9" ry="6" fill="#3a8a2e"/><ellipse cx="4" cy="104" rx="5" ry="6" fill="#8ab040"/>
<path d="M25 34 Q28 10 53 10 Q76 10 77 30 V86" fill="none" stroke="#a8acb0" stroke-width="4.5"/><path d="M81 32 V86" stroke="#787c80" stroke-width="2.5"/>
<path d="M25.5 35 L19 112" stroke="#c8ccd0" stroke-width="2.2" opacity="0.8"/>
<rect x="71" y="80" width="12" height="27" fill="#8c9094"/><path d="M84 92 L96 76" stroke="#9a9ea2" stroke-width="5"/><ellipse cx="86" cy="98" rx="6" ry="4" fill="#3a3c3e"/></g></svg>
<div class="t" style="left:481.0px;top:1190.0px;font-size:22px;line-height:35px;color:#222;font-weight:normal;">任务单号<span class="fc">:</span>00000153 <span class="fl">(</span><span style="color:#f39c12">工序委外</span><span class="fr">)</span></div>
<div class="t" style="left:481.0px;top:1220.0px;font-size:22px;line-height:35px;color:#222;font-weight:normal;">[RS-04003A]不锈钢菜盆冷热旋转龙头</div>
<div class="t" style="left:1549.0px;top:1191.5px;font-size:22px;line-height:35px;color:#222;font-weight:normal;"><b style="font-size:22px">2000</b> <span style="font-size:20.5px">PCS&nbsp; × 0.3元 = 600元</span></div>
<div class="t" style="left:1549.0px;top:1221.5px;font-size:22px;line-height:35px;color:#222;font-weight:normal;">月结&nbsp;&nbsp; 税率:0%</div>
<div class="t" style="left:1549.0px;top:1251.5px;font-size:22px;line-height:35px;color:#222;font-weight:normal;">工序<span class="fc">:</span>&nbsp;(机加)</div>
<div class="t" style="left:1990.0px;top:1193.0px;font-size:22.3px;line-height:36px;color:#222;font-weight:normal;">交期<span class="fc">:</span>2026-03-15</div>
<div class="t" style="left:1990.0px;top:1223.0px;font-size:22.3px;line-height:36px;color:#222;font-weight:normal;">已收货<span class="fc">:</span>0&nbsp;&nbsp;&nbsp;&nbsp; 未收货<span class="fc">:</span>2000</div>
<div class="t" style="left:1990.0px;top:1253.0px;font-size:22.3px;line-height:36px;color:#222;font-weight:normal;">良品退货<span class="fc">:</span>0&nbsp;&nbsp;&nbsp;&nbsp; 不良退货<span class="fc">:</span>0</div>
<div class="t" style="left:1990.0px;top:1283.0px;font-size:22.3px;line-height:36px;color:#222;font-weight:normal;">良品数<span class="fc">:</span>0 不良数<span class="fc">:</span>0</div>
<div class="r" style="left:1990.5px;top:1314.0px;width:280.5px;height:41.5px;border:1.5px solid #8fb4e6;border-radius:8px;background:#fff;overflow:hidden;"></div>
<div class="t" style="left:1990.5px;width:280px;text-align:center;top:1317.5px;font-size:22.5px;line-height:36px;color:#111;font-weight:normal;">0%</div>
<div class="t" style="left:2389.0px;top:1193.5px;font-size:22px;line-height:35px;color:#222;font-weight:normal;">订单审核<span class="fc">:</span><span style="color:#2aa02a">已审核</span></div>
<div class="t" style="left:2389.0px;top:1223.5px;font-size:22px;line-height:35px;color:#222;font-weight:normal;">订单状态<span class="fc">:</span><span style="color:#777">进行中</span></div>
<div class="t" style="left:2389.0px;top:1253.5px;font-size:22px;line-height:35px;color:#222;font-weight:normal;">负&nbsp; 责&nbsp; 人<span class="fc">:</span><span style="color:#777">邱泽权</span></div>
<div class="t" style="left:2389.0px;top:1283.5px;font-size:22px;line-height:35px;color:#222;font-weight:normal;">生产单号<span class="fc">:</span><span style="color:#777">hzx202603080001-1</span></div>
<div class="t" style="left:2832.0px;top:1188.5px;font-size:22.5px;line-height:36px;color:#222;font-weight:normal;">物料状态<span class="fc">:</span><span style="color:#2aa02a">已审核</span></div>
<div class="t" style="left:2832.0px;top:1218.5px;font-size:22.5px;line-height:36px;color:#222;font-weight:normal;">发料数量<span class="fc">:</span>0(0%)</div>
<div class="t" style="left:2832.0px;top:1248.5px;font-size:22.5px;line-height:36px;color:#222;font-weight:normal;">领料数量<span class="fc">:</span>0(0%)</div>
<div class="t" style="left:3088.8px;width:250px;text-align:center;top:1207.5px;font-size:22.5px;line-height:36px;color:#222;font-weight:normal;">￥0</div>
<div class="t" style="left:3088.8px;width:250px;text-align:center;top:1237.5px;font-size:22.5px;line-height:36px;color:#222;font-weight:normal;">￥0</div>
<svg class="r" style="left:3611.0px;top:1192.5px;" width="28" height="29" viewBox="0 0 28 29"><g fill="none" stroke="#444" stroke-width="2.8"><rect x="2" y="2" width="10" height="10"/><rect x="17" y="2" width="10" height="10"/><rect x="2" y="17" width="10" height="10"/></g><g fill="#444"><rect x="5.5" y="5.5" width="3" height="3"/><rect x="20.5" y="5.5" width="3" height="3"/><rect x="5.5" y="20.5" width="3" height="3"/><rect x="16" y="16" width="4" height="4"/><rect x="23" y="16" width="5" height="4"/><rect x="19" y="20" width="4" height="4"/><rect x="16" y="24" width="4" height="4"/><rect x="23" y="23" width="5" height="5"/></g></svg>
<svg class="r" style="left:3658.5px;top:1192.0px;" width="29" height="30" viewBox="0 0 29 30"><rect x="7" y="1" width="15" height="10" fill="#dfeeee" stroke="#9ab" stroke-width="1"/><rect x="1" y="9" width="27" height="12" rx="3" fill="#c8c8cc" stroke="#999" stroke-width="1"/><rect x="6" y="11" width="17" height="6" fill="#333"/><rect x="7" y="18" width="15" height="4" fill="#f4f4f4" stroke="#999" stroke-width="0.8"/><ellipse cx="14.5" cy="27" rx="13" ry="2" fill="#444"/><rect x="11" y="25" width="7" height="4" rx="1.5" fill="#3dba4e"/><rect x="13.8" y="21" width="1.4" height="5" fill="#888"/><circle cx="23" cy="12" r="1.2" fill="#3dba4e"/></svg>
<svg class="r" style="left:3707.0px;top:1191.5px;" width="26" height="30" viewBox="0 0 26 30"><path d="M3.5 1.2 H16 L22.8 8 V28.2 H3.5 Z" fill="#fff" stroke="#111" stroke-width="2.4"/><path d="M16 1 V8 H23 Z" fill="#111"/><rect x="0.5" y="10.3" width="25" height="11" rx="2.5" fill="#111"/><text x="13" y="19.6" font-size="9.6" font-weight="bold" text-anchor="middle" fill="#fff" font-family="Liberation Sans">LOG</text></svg>
<svg class="r" style="left:3751.5px;top:1195.0px;" width="22" height="22" viewBox="0 0 22 22"><rect x="0" y="0" width="2.5" height="22" fill="#777"/><path d="M3 2 Q8 0 12 2 Q17 4 21 2 V13 Q17 15 12 13 Q8 11 3 13 Z" fill="#888"/></svg>
<div class="r" style="left:3646.0px;top:1239.5px;width:93.0px;height:52.0px;background:#e6e6e6;"></div>
<div class="t" style="left:3669.0px;top:1248.0px;font-size:22.5px;line-height:36px;color:#333;font-weight:normal;">操作</div>
<svg class="r" style="left:3715.0px;top:1261.5px;" width="13" height="8" viewBox="0 0 13 8"><path d="M0 0 L13 0 L6.5 8 Z" fill="#333"/></svg>
<div class="r" style="left:367.0px;top:1390.5px;width:3415.0px;height:233.0px;border:1.5px solid #d3dbe4;background:#fff;"></div>
<div class="r" style="left:368.5px;top:1392.0px;width:3412.0px;height:55.5px;background:#f2f2f2;"></div>
<div class="r" style="left:367.0px;top:1447.0px;width:3415.0px;height:1.5px;background:#d3dbe4;"></div>
<div class="r" style="left:1535.2px;top:1447.0px;width:1.5px;height:176.0px;background:#d3dbe4;"></div>
<div class="r" style="left:1978.8px;top:1447.0px;width:1.5px;height:176.0px;background:#d3dbe4;"></div>
<div class="r" style="left:2375.2px;top:1447.0px;width:1.5px;height:176.0px;background:#d3dbe4;"></div>
<div class="r" style="left:2824.8px;top:1447.0px;width:1.5px;height:176.0px;background:#d3dbe4;"></div>
<div class="r" style="left:3087.2px;top:1447.0px;width:1.5px;height:176.0px;background:#d3dbe4;"></div>
<div class="r" style="left:3338.9px;top:1447.0px;width:1.5px;height:176.0px;background:#d3dbe4;"></div>
<div class="r" style="left:3602.9px;top:1447.0px;width:1.5px;height:176.0px;background:#d3dbe4;"></div>
<div class="r" style="left:375.0px;top:1409.0px;width:22.0px;height:22.0px;border:2px solid #767676;border-radius:4px;background:#fff;"></div>
<div class="t" style="left:413.0px;top:1405.5px;font-size:24px;line-height:38px;color:#222;font-weight:bold;transform:scaleX(1.205);transform-origin:0 50%;">2026-03-07</div>
<div class="t" style="left:573.0px;top:1406.5px;font-size:22.4px;line-height:36px;color:#222;font-weight:normal;">委外单号:00000152</div>
<svg class="r" style="left:1536.0px;top:1407.0px;" width="31" height="30" viewBox="0 0 31 30"><path d="M3.3 1 H26.6 L29.5 9.5 A4.8 4.8 0 0 1 19.4 9.5 A4.5 4.5 0 0 1 10.3 9.5 A4.9 4.9 0 0 1 0.5 9.5 Z M10.3 4.5 V9.5 M19.4 4.5 V9.5 M3.7 18 V24.5 Q3.7 27.2 6.5 27.2 H23.2 Q26 27.2 26 24.5 V18" fill="none" stroke="#8a8a8a" stroke-width="1.8" stroke-linejoin="round"/></svg>
<div class="t" style="left:1566.0px;top:1402.3px;font-size:22px;line-height:35px;color:#222;font-weight:normal;">益龙达贴片厂</div>
<div class="t" style="left:2225.0px;width:600px;text-align:right;top:1402.3px;font-size:22px;line-height:35px;color:#222;font-weight:normal;">下单人员:邱泽权</div>
<svg class="r" style="left:2982.0px;top:1404.5px;" width="30" height="31" viewBox="0 0 30 31"><defs><linearGradient id="fp" x1="0" y1="0" x2="1" y2="0"><stop offset="0" stop-color="#4d8fdc"/><stop offset="0.5" stop-color="#6fb0f0"/><stop offset="1" stop-color="#8cc8fa"/></linearGradient></defs><rect x="1" y="1" width="28" height="29" rx="3" fill="url(#fp)"/><rect x="6" y="1.5" width="19" height="14" fill="#fafafa"/><rect x="6" y="1.5" width="19" height="3" fill="#f08a30"/><path d="M7 8.5 H24 M7 12 H24" stroke="#dde4ea" stroke-width="1"/><rect x="7" y="20" width="16" height="9" fill="#c8d4dc"/><ellipse cx="12" cy="24.5" rx="1.8" ry="2.8" fill="#2a5aa0"/></svg>
<div class="r" style="left:3024.0px;top:1405.5px;width:50.0px;height:27.5px;border:1px solid #777;border-radius:3px;background:#f2f2f2;"></div>
<div class="t" style="left:3026.5px;top:1402.3px;font-size:22px;line-height:35px;color:#111;font-weight:normal;">文件</div>
<div class="t" style="left:3079.0px;top:1402.3px;font-size:22px;line-height:35px;color:#222;font-weight:normal;">(0)</div>
<svg class="r" style="left:3130.0px;top:1407.5px;" width="34" height="26.5" viewBox="0 0 34 26.5"><defs><linearGradient id="sk" x1="0" y1="0" x2="0" y2="1"><stop offset="0" stop-color="#3e8ee0"/><stop offset="0.6" stop-color="#f4f8fb"/></linearGradient><linearGradient id="hl" x1="0" y1="0" x2="0" y2="1"><stop offset="0" stop-color="#5ab85a"/><stop offset="1" stop-color="#158a20"/></linearGradient></defs><rect x="0" y="0" width="34" height="26.5" fill="#8a8e94"/><rect x="2" y="2" width="30" height="21" fill="url(#sk)"/><path d="M2 23 V19 Q8 17 12 14 Q17 10 22 13 Q27 16 32 17 V23 Z" fill="url(#hl)"/><circle cx="27" cy="6" r="1.8" fill="#f5a030"/><rect x="0" y="24" width="34" height="2.5" fill="#9a96a8"/></svg>
<div class="r" style="left:3174.0px;top:1405.5px;width:50.0px;height:27.5px;border:1px solid #777;border-radius:3px;background:#f2f2f2;"></div>
<div class="t" style="left:3176.5px;top:1402.3px;font-size:22px;line-height:35px;color:#111;font-weight:normal;">图片</div>
<div class="t" style="left:3229.0px;top:1402.3px;font-size:22px;line-height:35px;color:#222;font-weight:normal;">(0)</div>
<svg class="r" style="left:3651.5px;top:1403.5px;" width="29" height="30" viewBox="0 0 29 30"><rect x="7" y="1" width="15" height="10" fill="#dfeeee" stroke="#9ab" stroke-width="1"/><rect x="1" y="9" width="27" height="12" rx="3" fill="#c8c8cc" stroke="#999" stroke-width="1"/><rect x="6" y="11" width="17" height="6" fill="#333"/><rect x="7" y="18" width="15" height="4" fill="#f4f4f4" stroke="#999" stroke-width="0.8"/><ellipse cx="14.5" cy="27" rx="13" ry="2" fill="#444"/><rect x="11" y="25" width="7" height="4" rx="1.5" fill="#3dba4e"/><rect x="13.8" y="21" width="1.4" height="5" fill="#888"/><circle cx="23" cy="12" r="1.2" fill="#3dba4e"/></svg>
<div class="r" style="left:3687.0px;top:1405.5px;width:56.5px;height:25.5px;background:#efefef;"></div>
<svg class="r" style="left:3709.0px;top:1414.5px;" width="13" height="8" viewBox="0 0 13 8"><path d="M0 0 L13 0 L6.5 8 Z" fill="#222"/></svg>
<div class="r" style="left:367.5px;top:1476.0px;width:112.5px;height:112.0px;background:#e0e0e0;"></div>
<div class="t" style="left:387.5px;top:1498.0px;font-size:29px;line-height:36px;color:#c4c4c4;font-family:Liberation Serif,serif;letter-spacing:8px">暂无</div>
<div class="t" style="left:387.5px;top:1532.0px;font-size:29px;line-height:36px;color:#c4c4c4;font-family:Liberation Serif,serif;letter-spacing:8px">图片</div>
<div class="t" style="left:481.0px;top:1447.0px;font-size:22px;line-height:35px;color:#222;font-weight:normal;">任务单号<span class="fc">:</span>00000152 <span class="fl">(</span><span style="color:#f39c12">工序委外</span><span class="fr">)</span></div>
<div class="t" style="left:481.0px;top:1477.0px;font-size:22px;line-height:35px;color:#222;font-weight:normal;">[RA0052]TIRIRT拉片头</div>
<div class="t" style="left:484.0px;top:1522.0px;font-size:22px;line-height:35px;color:#222;font-weight:normal;">哑枪</div>
<div class="t" style="left:1549.0px;top:1448.5px;font-size:22px;line-height:35px;color:#222;font-weight:normal;"><b style="font-size:22px">2000</b> <span style="font-size:20.5px">PCS&nbsp; × 0元 = 0元</span></div>
<div class="t" style="left:1549.0px;top:1478.5px;font-size:22px;line-height:35px;color:#222;font-weight:normal;">月结&nbsp;&nbsp; 税率:0%</div>
<div class="t" style="left:1549.0px;top:1508.5px;font-size:22px;line-height:35px;color:#222;font-weight:normal;">工序<span class="fc">:</span>&nbsp;(发外)</div>
<div class="t" style="left:1990.0px;top:1450.0px;font-size:22.3px;line-height:36px;color:#222;font-weight:normal;">交期<span class="fc">:</span>2026-03-14</div>
<div class="t" style="left:1990.0px;top:1480.0px;font-size:22.3px;line-height:36px;color:#222;font-weight:normal;">已收货<span class="fc">:</span>0&nbsp;&nbsp;&nbsp;&nbsp; 未收货<span class="fc">:</span>2000</div>
<div class="t" style="left:1990.0px;top:1510.0px;font-size:22.3px;line-height:36px;color:#222;font-weight:normal;">良品退货<span class="fc">:</span>0&nbsp;&nbsp;&nbsp;&nbsp; 不良退货<span class="fc">:</span>0</div>
<div class="t" style="left:1990.0px;top:1540.0px;font-size:22.3px;line-height:36px;color:#222;font-weight:normal;">良品数<span class="fc">:</span>0 不良数<span class="fc">:</span>0</div>
<div class="r" style="left:1990.5px;top:1571.0px;width:280.5px;height:41.5px;border:1.5px solid #8fb4e6;border-radius:8px;background:#fff;overflow:hidden;"></div>
<div class="t" style="left:1990.5px;width:280px;text-align:center;top:1574.5px;font-size:22.5px;line-height:36px;color:#111;font-weight:normal;">0%</div>
<div class="t" style="left:2389.0px;top:1450.5px;font-size:22px;line-height:35px;color:#222;font-weight:normal;">订单审核<span class="fc">:</span><span style="color:#2aa02a">已审核</span></div>
<div class="t" style="left:2389.0px;top:1480.5px;font-size:22px;line-height:35px;color:#222;font-weight:normal;">订单状态<span class="fc">:</span><span style="color:#777">进行中</span></div>
<div class="t" style="left:2389.0px;top:1510.5px;font-size:22px;line-height:35px;color:#222;font-weight:normal;">负&nbsp; 责&nbsp; 人<span class="fc">:</span><span style="color:#777">邱泽权</span></div>
<div class="t" style="left:2389.0px;top:1540.5px;font-size:22px;line-height:35px;color:#222;font-weight:normal;">生产单号<span class="fc">:</span><span style="color:#777">hzx202603070001-1</span></div>
<div class="t" style="left:2832.0px;top:1445.5px;font-size:22.5px;line-height:36px;color:#222;font-weight:normal;">物料状态<span class="fc">:</span><span style="color:#2aa02a">已审核</span></div>
<div class="t" style="left:2832.0px;top:1475.5px;font-size:22.5px;line-height:36px;color:#222;font-weight:normal;">发料数量<span class="fc">:</span>0(0%)</div>
<div class="t" style="left:2832.0px;top:1505.5px;font-size:22.5px;line-height:36px;color:#222;font-weight:normal;">领料数量<span class="fc">:</span>0(0%)</div>
<div class="t" style="left:3088.8px;width:250px;text-align:center;top:1464.5px;font-size:22.5px;line-height:36px;color:#222;font-weight:normal;">￥0</div>
<div class="t" style="left:3088.8px;width:250px;text-align:center;top:1494.5px;font-size:22.5px;line-height:36px;color:#222;font-weight:normal;">￥0</div>
<svg class="r" style="left:3611.0px;top:1449.5px;" width="28" height="29" viewBox="0 0 28 29"><g fill="none" stroke="#444" stroke-width="2.8"><rect x="2" y="2" width="10" height="10"/><rect x="17" y="2" width="10" height="10"/><rect x="2" y="17" width="10" height="10"/></g><g fill="#444"><rect x="5.5" y="5.5" width="3" height="3"/><rect x="20.5" y="5.5" width="3" height="3"/><rect x="5.5" y="20.5" width="3" height="3"/><rect x="16" y="16" width="4" height="4"/><rect x="23" y="16" width="5" height="4"/><rect x="19" y="20" width="4" height="4"/><rect x="16" y="24" width="4" height="4"/><rect x="23" y="23" width="5" height="5"/></g></svg>
<svg class="r" style="left:3658.5px;top:1449.0px;" width="29" height="30" viewBox="0 0 29 30"><rect x="7" y="1" width="15" height="10" fill="#dfeeee" stroke="#9ab" stroke-width="1"/><rect x="1" y="9" width="27" height="12" rx="3" fill="#c8c8cc" stroke="#999" stroke-width="1"/><rect x="6" y="11" width="17" height="6" fill="#333"/><rect x="7" y="18" width="15" height="4" fill="#f4f4f4" stroke="#999" stroke-width="0.8"/><ellipse cx="14.5" cy="27" rx="13" ry="2" fill="#444"/><rect x="11" y="25" width="7" height="4" rx="1.5" fill="#3dba4e"/><rect x="13.8" y="21" width="1.4" height="5" fill="#888"/><circle cx="23" cy="12" r="1.2" fill="#3dba4e"/></svg>
<svg class="r" style="left:3707.0px;top:1448.5px;" width="26" height="30" viewBox="0 0 26 30"><path d="M3.5 1.2 H16 L22.8 8 V28.2 H3.5 Z" fill="#fff" stroke="#111" stroke-width="2.4"/><path d="M16 1 V8 H23 Z" fill="#111"/><rect x="0.5" y="10.3" width="25" height="11" rx="2.5" fill="#111"/><text x="13" y="19.6" font-size="9.6" font-weight="bold" text-anchor="middle" fill="#fff" font-family="Liberation Sans">LOG</text></svg>
<svg class="r" style="left:3751.5px;top:1452.0px;" width="22" height="22" viewBox="0 0 22 22"><rect x="0" y="0" width="2.5" height="22" fill="#777"/><path d="M3 2 Q8 0 12 2 Q17 4 21 2 V13 Q17 15 12 13 Q8 11 3 13 Z" fill="#888"/></svg>
<div class="r" style="left:3646.0px;top:1496.5px;width:93.0px;height:52.0px;background:#e6e6e6;"></div>
<div class="t" style="left:3669.0px;top:1505.0px;font-size:22.5px;line-height:36px;color:#333;font-weight:normal;">操作</div>
<svg class="r" style="left:3715.0px;top:1518.5px;" width="13" height="8" viewBox="0 0 13 8"><path d="M0 0 L13 0 L6.5 8 Z" fill="#333"/></svg>
<div class="r" style="left:367.0px;top:1646.5px;width:3415.0px;height:233.0px;border:1.5px solid #d3dbe4;background:#fff;"></div>
<div class="r" style="left:368.5px;top:1648.0px;width:3412.0px;height:55.5px;background:#f2f2f2;"></div>
<div class="r" style="left:367.0px;top:1703.0px;width:3415.0px;height:1.5px;background:#d3dbe4;"></div>
<div class="r" style="left:1535.2px;top:1703.0px;width:1.5px;height:176.0px;background:#d3dbe4;"></div>
<div class="r" style="left:1978.8px;top:1703.0px;width:1.5px;height:176.0px;background:#d3dbe4;"></div>
<div class="r" style="left:2375.2px;top:1703.0px;width:1.5px;height:176.0px;background:#d3dbe4;"></div>
<div class="r" style="left:2824.8px;top:1703.0px;width:1.5px;height:176.0px;background:#d3dbe4;"></div>
<div class="r" style="left:3087.2px;top:1703.0px;width:1.5px;height:176.0px;background:#d3dbe4;"></div>
<div class="r" style="left:3338.9px;top:1703.0px;width:1.5px;height:176.0px;background:#d3dbe4;"></div>
<div class="r" style="left:3602.9px;top:1703.0px;width:1.5px;height:176.0px;background:#d3dbe4;"></div>
<div class="r" style="left:375.0px;top:1665.0px;width:22.0px;height:22.0px;border:2px solid #767676;border-radius:4px;background:#fff;"></div>
<div class="t" style="left:413.0px;top:1661.5px;font-size:24px;line-height:38px;color:#222;font-weight:bold;transform:scaleX(1.205);transform-origin:0 50%;">2026-03-02</div>
<div class="t" style="left:573.0px;top:1662.5px;font-size:22.4px;line-height:36px;color:#222;font-weight:normal;">委外单号:00000151</div>
<svg class="r" style="left:1536.0px;top:1663.0px;" width="31" height="30" viewBox="0 0 31 30"><path d="M3.3 1 H26.6 L29.5 9.5 A4.8 4.8 0 0 1 19.4 9.5 A4.5 4.5 0 0 1 10.3 9.5 A4.9 4.9 0 0 1 0.5 9.5 Z M10.3 4.5 V9.5 M19.4 4.5 V9.5 M3.7 18 V24.5 Q3.7 27.2 6.5 27.2 H23.2 Q26 27.2 26 24.5 V18" fill="none" stroke="#8a8a8a" stroke-width="1.8" stroke-linejoin="round"/></svg>
<div class="t" style="left:1566.0px;top:1658.3px;font-size:22px;line-height:35px;color:#222;font-weight:normal;">益龙达贴片厂</div>
<div class="t" style="left:2225.0px;width:600px;text-align:right;top:1658.3px;font-size:22px;line-height:35px;color:#222;font-weight:normal;">下单人员:邱泽权</div>
<svg class="r" style="left:2982.0px;top:1660.5px;" width="30" height="31" viewBox="0 0 30 31"><defs><linearGradient id="fp" x1="0" y1="0" x2="1" y2="0"><stop offset="0" stop-color="#4d8fdc"/><stop offset="0.5" stop-color="#6fb0f0"/><stop offset="1" stop-color="#8cc8fa"/></linearGradient></defs><rect x="1" y="1" width="28" height="29" rx="3" fill="url(#fp)"/><rect x="6" y="1.5" width="19" height="14" fill="#fafafa"/><rect x="6" y="1.5" width="19" height="3" fill="#f08a30"/><path d="M7 8.5 H24 M7 12 H24" stroke="#dde4ea" stroke-width="1"/><rect x="7" y="20" width="16" height="9" fill="#c8d4dc"/><ellipse cx="12" cy="24.5" rx="1.8" ry="2.8" fill="#2a5aa0"/></svg>
<div class="r" style="left:3024.0px;top:1661.5px;width:50.0px;height:27.5px;border:1px solid #777;border-radius:3px;background:#f2f2f2;"></div>
<div class="t" style="left:3026.5px;top:1658.3px;font-size:22px;line-height:35px;color:#111;font-weight:normal;">文件</div>
<div class="t" style="left:3079.0px;top:1658.3px;font-size:22px;line-height:35px;color:#222;font-weight:normal;">(0)</div>
<svg class="r" style="left:3130.0px;top:1663.5px;" width="34" height="26.5" viewBox="0 0 34 26.5"><defs><linearGradient id="sk" x1="0" y1="0" x2="0" y2="1"><stop offset="0" stop-color="#3e8ee0"/><stop offset="0.6" stop-color="#f4f8fb"/></linearGradient><linearGradient id="hl" x1="0" y1="0" x2="0" y2="1"><stop offset="0" stop-color="#5ab85a"/><stop offset="1" stop-color="#158a20"/></linearGradient></defs><rect x="0" y="0" width="34" height="26.5" fill="#8a8e94"/><rect x="2" y="2" width="30" height="21" fill="url(#sk)"/><path d="M2 23 V19 Q8 17 12 14 Q17 10 22 13 Q27 16 32 17 V23 Z" fill="url(#hl)"/><circle cx="27" cy="6" r="1.8" fill="#f5a030"/><rect x="0" y="24" width="34" height="2.5" fill="#9a96a8"/></svg>
<div class="r" style="left:3174.0px;top:1661.5px;width:50.0px;height:27.5px;border:1px solid #777;border-radius:3px;background:#f2f2f2;"></div>
<div class="t" style="left:3176.5px;top:1658.3px;font-size:22px;line-height:35px;color:#111;font-weight:normal;">图片</div>
<div class="t" style="left:3229.0px;top:1658.3px;font-size:22px;line-height:35px;color:#222;font-weight:normal;">(0)</div>
<svg class="r" style="left:3651.5px;top:1659.5px;" width="29" height="30" viewBox="0 0 29 30"><rect x="7" y="1" width="15" height="10" fill="#dfeeee" stroke="#9ab" stroke-width="1"/><rect x="1" y="9" width="27" height="12" rx="3" fill="#c8c8cc" stroke="#999" stroke-width="1"/><rect x="6" y="11" width="17" height="6" fill="#333"/><rect x="7" y="18" width="15" height="4" fill="#f4f4f4" stroke="#999" stroke-width="0.8"/><ellipse cx="14.5" cy="27" rx="13" ry="2" fill="#444"/><rect x="11" y="25" width="7" height="4" rx="1.5" fill="#3dba4e"/><rect x="13.8" y="21" width="1.4" height="5" fill="#888"/><circle cx="23" cy="12" r="1.2" fill="#3dba4e"/></svg>
<div class="r" style="left:3687.0px;top:1661.5px;width:56.5px;height:25.5px;background:#efefef;"></div>
<svg class="r" style="left:3709.0px;top:1670.5px;" width="13" height="8" viewBox="0 0 13 8"><path d="M0 0 L13 0 L6.5 8 Z" fill="#222"/></svg>
<svg class="r" style="left:368.0px;top:1750.5px;" width="112" height="76.5" viewBox="0 0 112 76.5"><defs><radialGradient id="cg" cx="45%" cy="55%" r="75%"><stop offset="0" stop-color="#b8b9b7"/><stop offset="0.7" stop-color="#a2a4a2"/><stop offset="1" stop-color="#646a66"/></radialGradient><filter id="cb" x="0" y="0" width="1" height="1"><feGaussianBlur stdDeviation="0.8"/></filter></defs>
<rect width="112" height="76.5" fill="url(#cg)"/><g filter="url(#cb)">
<path d="M38 11 L18.8 68" stroke="#444" stroke-width="2.2" fill="none"/><path d="M40 16 L24.6 60" stroke="#eee" stroke-width="2.5" fill="none"/>
<path d="M24 62 Q55 58 88 64" stroke="#e6e6e6" stroke-width="4" fill="none"/><path d="M25 68 Q55 66 86 68" stroke="#707070" stroke-width="1.8" fill="none"/><path d="M22 73 Q55 74 90 72" stroke="#dadada" stroke-width="2" fill="none"/>
<path d="M61.6 27 Q75 38 86 62" stroke="#6a6a6a" stroke-width="2.5" fill="none"/><path d="M66 26 Q80 36 90 60" stroke="#dedede" stroke-width="2" fill="none"/>
<path d="M48 22 Q52 10 62 12 Q70 8 74 14 L70 24 Q60 30 52 28 Z" fill="#7a7a7a"/><ellipse cx="58" cy="20" rx="4" ry="3" fill="#3a3a3a"/><rect x="63" y="10" width="8" height="4" fill="#3a3a3a" transform="rotate(-25 67 12)"/><ellipse cx="63" cy="27" rx="3" ry="2" fill="#f0f0f0"/></g></svg>
<div class="t" style="left:481.0px;top:1703.0px;font-size:22px;line-height:35px;color:#222;font-weight:normal;">任务单号<span class="fc">:</span>00000151 <span class="fl">(</span><span style="color:#f39c12">工序委外</span><span class="fr">)</span></div>
<div class="t" style="left:481.0px;top:1733.0px;font-size:22px;line-height:35px;color:#222;font-weight:normal;">[00000002]本思电源线</div>
<div class="t" style="left:1549.0px;top:1704.5px;font-size:22px;line-height:35px;color:#222;font-weight:normal;"><b style="font-size:22px">51</b> <span style="font-size:20.5px">PCS&nbsp; × 10元 = 510元</span></div>
<div class="t" style="left:1549.0px;top:1734.5px;font-size:22px;line-height:35px;color:#222;font-weight:normal;">月结&nbsp;&nbsp; 税率:0%</div>
<div class="t" style="left:1549.0px;top:1764.5px;font-size:22px;line-height:35px;color:#222;font-weight:normal;">工序<span class="fc">:</span>&nbsp;(电源线铜、铝单丝拉制)</div>
<div class="t" style="left:1990.0px;top:1706.0px;font-size:22.3px;line-height:36px;color:#222;font-weight:normal;">交期<span class="fc">:</span>2026-03-09</div>
<div class="t" style="left:1990.0px;top:1736.0px;font-size:22.3px;line-height:36px;color:#222;font-weight:normal;">已收货<span class="fc">:</span>0&nbsp;&nbsp;&nbsp;&nbsp; 未收货<span class="fc">:</span>51</div>
<div class="t" style="left:1990.0px;top:1766.0px;font-size:22.3px;line-height:36px;color:#222;font-weight:normal;">良品退货<span class="fc">:</span>0&nbsp;&nbsp;&nbsp;&nbsp; 不良退货<span class="fc">:</span>0</div>
<div class="t" style="left:1990.0px;top:1796.0px;font-size:22.3px;line-height:36px;color:#222;font-weight:normal;">良品数<span class="fc">:</span>0 不良数<span class="fc">:</span>0</div>
<div class="r" style="left:1990.5px;top:1827.0px;width:280.5px;height:41.5px;border:1.5px solid #8fb4e6;border-radius:8px;background:#fff;overflow:hidden;"></div>
<div class="t" style="left:1990.5px;width:280px;text-align:center;top:1830.5px;font-size:22.5px;line-height:36px;color:#111;font-weight:normal;">0%</div>
<div class="t" style="left:2389.0px;top:1706.5px;font-size:22px;line-height:35px;color:#222;font-weight:normal;">订单审核<span class="fc">:</span><span style="color:#2aa02a">已审核</span></div>
<div class="t" style="left:2389.0px;top:1736.5px;font-size:22px;line-height:35px;color:#222;font-weight:normal;">订单状态<span class="fc">:</span><span style="color:#777">进行中</span></div>
<div class="t" style="left:2389.0px;top:1766.5px;font-size:22px;line-height:35px;color:#222;font-weight:normal;">负&nbsp; 责&nbsp; 人<span class="fc">:</span><span style="color:#777">邱泽权</span></div>
<div class="t" style="left:2389.0px;top:1796.5px;font-size:22px;line-height:35px;color:#222;font-weight:normal;">生产单号<span class="fc">:</span><span style="color:#777">hzx202603020002-1</span></div>
<div class="t" style="left:2832.0px;top:1701.5px;font-size:22.5px;line-height:36px;color:#222;font-weight:normal;">物料状态<span class="fc">:</span><span style="color:#2aa02a">已审核</span></div>
<div class="t" style="left:2832.0px;top:1731.5px;font-size:22.5px;line-height:36px;color:#222;font-weight:normal;">发料数量<span class="fc">:</span>0(0%)</div>
<div class="t" style="left:2832.0px;top:1761.5px;font-size:22.5px;line-height:36px;color:#222;font-weight:normal;">领料数量<span class="fc">:</span>0(0%)</div>
<div class="t" style="left:3088.8px;width:250px;text-align:center;top:1720.5px;font-size:22.5px;line-height:36px;color:#222;font-weight:normal;">￥0</div>
<div class="t" style="left:3088.8px;width:250px;text-align:center;top:1750.5px;font-size:22.5px;line-height:36px;color:#222;font-weight:normal;">￥0</div>
<svg class="r" style="left:3611.0px;top:1705.5px;" width="28" height="29" viewBox="0 0 28 29"><g fill="none" stroke="#444" stroke-width="2.8"><rect x="2" y="2" width="10" height="10"/><rect x="17" y="2" width="10" height="10"/><rect x="2" y="17" width="10" height="10"/></g><g fill="#444"><rect x="5.5" y="5.5" width="3" height="3"/><rect x="20.5" y="5.5" width="3" height="3"/><rect x="5.5" y="20.5" width="3" height="3"/><rect x="16" y="16" width="4" height="4"/><rect x="23" y="16" width="5" height="4"/><rect x="19" y="20" width="4" height="4"/><rect x="16" y="24" width="4" height="4"/><rect x="23" y="23" width="5" height="5"/></g></svg>
<svg class="r" style="left:3658.5px;top:1705.0px;" width="29" height="30" viewBox="0 0 29 30"><rect x="7" y="1" width="15" height="10" fill="#dfeeee" stroke="#9ab" stroke-width="1"/><rect x="1" y="9" width="27" height="12" rx="3" fill="#c8c8cc" stroke="#999" stroke-width="1"/><rect x="6" y="11" width="17" height="6" fill="#333"/><rect x="7" y="18" width="15" height="4" fill="#f4f4f4" stroke="#999" stroke-width="0.8"/><ellipse cx="14.5" cy="27" rx="13" ry="2" fill="#444"/><rect x="11" y="25" width="7" height="4" rx="1.5" fill="#3dba4e"/><rect x="13.8" y="21" width="1.4" height="5" fill="#888"/><circle cx="23" cy="12" r="1.2" fill="#3dba4e"/></svg>
<svg class="r" style="left:3707.0px;top:1704.5px;" width="26" height="30" viewBox="0 0 26 30"><path d="M3.5 1.2 H16 L22.8 8 V28.2 H3.5 Z" fill="#fff" stroke="#111" stroke-width="2.4"/><path d="M16 1 V8 H23 Z" fill="#111"/><rect x="0.5" y="10.3" width="25" height="11" rx="2.5" fill="#111"/><text x="13" y="19.6" font-size="9.6" font-weight="bold" text-anchor="middle" fill="#fff" font-family="Liberation Sans">LOG</text></svg>
<svg class="r" style="left:3751.5px;top:1708.0px;" width="22" height="22" viewBox="0 0 22 22"><rect x="0" y="0" width="2.5" height="22" fill="#777"/><path d="M3 2 Q8 0 12 2 Q17 4 21 2 V13 Q17 15 12 13 Q8 11 3 13 Z" fill="#888"/></svg>
<div class="r" style="left:3646.0px;top:1752.5px;width:93.0px;height:52.0px;background:#e6e6e6;"></div>
<div class="t" style="left:3669.0px;top:1761.0px;font-size:22.5px;line-height:36px;color:#333;font-weight:normal;">操作</div>
<svg class="r" style="left:3715.0px;top:1774.5px;" width="13" height="8" viewBox="0 0 13 8"><path d="M0 0 L13 0 L6.5 8 Z" fill="#333"/></svg>
<div class="r" style="left:367.0px;top:1902.5px;width:3415.0px;height:233.0px;border:1.5px solid #d3dbe4;background:#fff;"></div>
<div class="r" style="left:368.5px;top:1904.0px;width:3412.0px;height:55.5px;background:#f2f2f2;"></div>
<div class="r" style="left:367.0px;top:1959.0px;width:3415.0px;height:1.5px;background:#d3dbe4;"></div>
<div class="r" style="left:1535.2px;top:1959.0px;width:1.5px;height:176.0px;background:#d3dbe4;"></div>
<div class="r" style="left:1978.8px;top:1959.0px;width:1.5px;height:176.0px;background:#d3dbe4;"></div>
<div class="r" style="left:2375.2px;top:1959.0px;width:1.5px;height:176.0px;background:#d3dbe4;"></div>
<div class="r" style="left:2824.8px;top:1959.0px;width:1.5px;height:176.0px;background:#d3dbe4;"></div>
<div class="r" style="left:3087.2px;top:1959.0px;width:1.5px;height:176.0px;background:#d3dbe4;"></div>
<div class="r" style="left:3338.9px;top:1959.0px;width:1.5px;height:176.0px;background:#d3dbe4;"></div>
<div class="r" style="left:3602.9px;top:1959.0px;width:1.5px;height:176.0px;background:#d3dbe4;"></div>
<div class="r" style="left:375.0px;top:1921.0px;width:22.0px;height:22.0px;border:2px solid #767676;border-radius:4px;background:#fff;"></div>
<div class="t" style="left:413.0px;top:1917.5px;font-size:24px;line-height:38px;color:#222;font-weight:bold;transform:scaleX(1.205);transform-origin:0 50%;">2026-02-27</div>
<div class="t" style="left:573.0px;top:1918.5px;font-size:22.4px;line-height:36px;color:#222;font-weight:normal;">委外单号:00000150</div>
<svg class="r" style="left:1536.0px;top:1919.0px;" width="31" height="30" viewBox="0 0 31 30"><path d="M3.3 1 H26.6 L29.5 9.5 A4.8 4.8 0 0 1 19.4 9.5 A4.5 4.5 0 0 1 10.3 9.5 A4.9 4.9 0 0 1 0.5 9.5 Z M10.3 4.5 V9.5 M19.4 4.5 V9.5 M3.7 18 V24.5 Q3.7 27.2 6.5 27.2 H23.2 Q26 27.2 26 24.5 V18" fill="none" stroke="#8a8a8a" stroke-width="1.8" stroke-linejoin="round"/></svg>
<div class="t" style="left:1566.0px;top:1914.3px;font-size:22px;line-height:35px;color:#222;font-weight:normal;">益龙达贴片厂</div>
<div class="t" style="left:2225.0px;width:600px;text-align:right;top:1914.3px;font-size:22px;line-height:35px;color:#222;font-weight:normal;">下单人员:邱泽权</div>
<svg class="r" style="left:2982.0px;top:1916.5px;" width="30" height="31" viewBox="0 0 30 31"><defs><linearGradient id="fp" x1="0" y1="0" x2="1" y2="0"><stop offset="0" stop-color="#4d8fdc"/><stop offset="0.5" stop-color="#6fb0f0"/><stop offset="1" stop-color="#8cc8fa"/></linearGradient></defs><rect x="1" y="1" width="28" height="29" rx="3" fill="url(#fp)"/><rect x="6" y="1.5" width="19" height="14" fill="#fafafa"/><rect x="6" y="1.5" width="19" height="3" fill="#f08a30"/><path d="M7 8.5 H24 M7 12 H24" stroke="#dde4ea" stroke-width="1"/><rect x="7" y="20" width="16" height="9" fill="#c8d4dc"/><ellipse cx="12" cy="24.5" rx="1.8" ry="2.8" fill="#2a5aa0"/></svg>
<div class="r" style="left:3024.0px;top:1917.5px;width:50.0px;height:27.5px;border:1px solid #777;border-radius:3px;background:#f2f2f2;"></div>
<div class="t" style="left:3026.5px;top:1914.3px;font-size:22px;line-height:35px;color:#111;font-weight:normal;">文件</div>
<div class="t" style="left:3079.0px;top:1914.3px;font-size:22px;line-height:35px;color:#222;font-weight:normal;">(0)</div>
<svg class="r" style="left:3130.0px;top:1919.5px;" width="34" height="26.5" viewBox="0 0 34 26.5"><defs><linearGradient id="sk" x1="0" y1="0" x2="0" y2="1"><stop offset="0" stop-color="#3e8ee0"/><stop offset="0.6" stop-color="#f4f8fb"/></linearGradient><linearGradient id="hl" x1="0" y1="0" x2="0" y2="1"><stop offset="0" stop-color="#5ab85a"/><stop offset="1" stop-color="#158a20"/></linearGradient></defs><rect x="0" y="0" width="34" height="26.5" fill="#8a8e94"/><rect x="2" y="2" width="30" height="21" fill="url(#sk)"/><path d="M2 23 V19 Q8 17 12 14 Q17 10 22 13 Q27 16 32 17 V23 Z" fill="url(#hl)"/><circle cx="27" cy="6" r="1.8" fill="#f5a030"/><rect x="0" y="24" width="34" height="2.5" fill="#9a96a8"/></svg>
<div class="r" style="left:3174.0px;top:1917.5px;width:50.0px;height:27.5px;border:1px solid #777;border-radius:3px;background:#f2f2f2;"></div>
<div class="t" style="left:3176.5px;top:1914.3px;font-size:22px;line-height:35px;color:#111;font-weight:normal;">图片</div>
<div class="t" style="left:3229.0px;top:1914.3px;font-size:22px;line-height:35px;color:#222;font-weight:normal;">(0)</div>
<svg class="r" style="left:3651.5px;top:1915.5px;" width="29" height="30" viewBox="0 0 29 30"><rect x="7" y="1" width="15" height="10" fill="#dfeeee" stroke="#9ab" stroke-width="1"/><rect x="1" y="9" width="27" height="12" rx="3" fill="#c8c8cc" stroke="#999" stroke-width="1"/><rect x="6" y="11" width="17" height="6" fill="#333"/><rect x="7" y="18" width="15" height="4" fill="#f4f4f4" stroke="#999" stroke-width="0.8"/><ellipse cx="14.5" cy="27" rx="13" ry="2" fill="#444"/><rect x="11" y="25" width="7" height="4" rx="1.5" fill="#3dba4e"/><rect x="13.8" y="21" width="1.4" height="5" fill="#888"/><circle cx="23" cy="12" r="1.2" fill="#3dba4e"/></svg>
<div class="r" style="left:3687.0px;top:1917.5px;width:56.5px;height:25.5px;background:#efefef;"></div>
<svg class="r" style="left:3709.0px;top:1926.5px;" width="13" height="8" viewBox="0 0 13 8"><path d="M0 0 L13 0 L6.5 8 Z" fill="#222"/></svg>
<div class="r" style="left:367.5px;top:1988.0px;width:112.5px;height:112.0px;background:#e0e0e0;"></div>
<div class="t" style="left:387.5px;top:2010.0px;font-size:29px;line-height:36px;color:#c4c4c4;font-family:Liberation Serif,serif;letter-spacing:8px">暂无</div>
<div class="t" style="left:387.5px;top:2044.0px;font-size:29px;line-height:36px;color:#c4c4c4;font-family:Liberation Serif,serif;letter-spacing:8px">图片</div>
<div class="t" style="left:481.0px;top:1959.0px;font-size:22px;line-height:35px;color:#222;font-weight:normal;">任务单号<span class="fc">:</span>00000150 <span class="fl">(</span><span style="color:#f39c12">工序委外</span><span class="fr">)</span></div>
<div class="t" style="left:481.0px;top:1989.0px;font-size:22px;line-height:35px;color:#222;font-weight:normal;">[00007273]机头料</div>
<div class="t" style="left:1549.0px;top:1960.5px;font-size:22px;line-height:35px;color:#222;font-weight:normal;"><b style="font-size:22px">1</b> <span style="font-size:20.5px">PCS&nbsp; × 0.1元 = 0.1元</span></div>
<div class="t" style="left:1549.0px;top:1990.5px;font-size:22px;line-height:35px;color:#222;font-weight:normal;">月结&nbsp;&nbsp; 税率:0%</div>
<div class="t" style="left:1549.0px;top:2020.5px;font-size:22px;line-height:35px;color:#222;font-weight:normal;">工序<span class="fc">:</span>&nbsp;(1)</div>
<div class="t" style="left:1990.0px;top:1962.0px;font-size:22.3px;line-height:36px;color:#222;font-weight:normal;">交期<span class="fc">:</span>2026-03-06</div>
<div class="t" style="left:1990.0px;top:1992.0px;font-size:22.3px;line-height:36px;color:#222;font-weight:normal;">已收货<span class="fc">:</span>0/0&nbsp;&nbsp;&nbsp;&nbsp; 未收货<span class="fc">:</span>0</div>
<div class="t" style="left:1990.0px;top:2022.0px;font-size:22.3px;line-height:36px;color:#222;font-weight:normal;">良品退货<span class="fc">:</span>0&nbsp;&nbsp;&nbsp;&nbsp; 不良退货<span class="fc">:</span>0</div>
<div class="t" style="left:1990.0px;top:2052.0px;font-size:22.3px;line-height:36px;color:#222;font-weight:normal;">良品数<span class="fc">:</span>0 不良数<span class="fc">:</span>0</div>
<div class="r" style="left:1990.5px;top:2083.0px;width:280.5px;height:41.5px;border:1.5px solid #8fb4e6;border-radius:8px;background:#fff;overflow:hidden;"></div>
<div class="t" style="left:1990.5px;width:280px;text-align:center;top:2086.5px;font-size:22.5px;line-height:36px;color:#111;font-weight:normal;">0%</div>
<div class="t" style="left:2389.0px;top:1962.5px;font-size:22px;line-height:35px;color:#222;font-weight:normal;">订单审核<span class="fc">:</span><span style="color:#f0a040">未审核</span></div>
<div class="t" style="left:2389.0px;top:1992.5px;font-size:22px;line-height:35px;color:#222;font-weight:normal;">订单状态<span class="fc">:</span><span style="color:#777">进行中</span></div>
<div class="t" style="left:2389.0px;top:2022.5px;font-size:22px;line-height:35px;color:#222;font-weight:normal;">负&nbsp; 责&nbsp; 人<span class="fc">:</span><span style="color:#777">邱泽权</span></div>
<div class="t" style="left:2389.0px;top:2052.5px;font-size:22px;line-height:35px;color:#222;font-weight:normal;">生产单号<span class="fc">:</span><span style="color:#777">ldb-bc-p--4691</span></div>
<div class="t" style="left:2832.0px;top:1957.5px;font-size:22.5px;line-height:36px;color:#222;font-weight:normal;">物料状态<span class="fc">:</span><span style="color:#2aa02a">已审核</span></div>
<div class="t" style="left:2832.0px;top:1987.5px;font-size:22.5px;line-height:36px;color:#222;font-weight:normal;">发料数量<span class="fc">:</span>0(0%)</div>
<div class="t" style="left:2832.0px;top:2017.5px;font-size:22.5px;line-height:36px;color:#222;font-weight:normal;">领料数量<span class="fc">:</span>0(0%)</div>
<div class="t" style="left:3088.8px;width:250px;text-align:center;top:1976.5px;font-size:22.5px;line-height:36px;color:#222;font-weight:normal;">￥0</div>
<div class="t" style="left:3088.8px;width:250px;text-align:center;top:2006.5px;font-size:22.5px;line-height:36px;color:#222;font-weight:normal;">￥0</div>
<svg class="r" style="left:3611.0px;top:1961.5px;" width="28" height="29" viewBox="0 0 28 29"><g fill="none" stroke="#444" stroke-width="2.8"><rect x="2" y="2" width="10" height="10"/><rect x="17" y="2" width="10" height="10"/><rect x="2" y="17" width="10" height="10"/></g><g fill="#444"><rect x="5.5" y="5.5" width="3" height="3"/><rect x="20.5" y="5.5" width="3" height="3"/><rect x="5.5" y="20.5" width="3" height="3"/><rect x="16" y="16" width="4" height="4"/><rect x="23" y="16" width="5" height="4"/><rect x="19" y="20" width="4" height="4"/><rect x="16" y="24" width="4" height="4"/><rect x="23" y="23" width="5" height="5"/></g></svg>
<svg class="r" style="left:3658.5px;top:1961.0px;" width="29" height="30" viewBox="0 0 29 30"><rect x="7" y="1" width="15" height="10" fill="#dfeeee" stroke="#9ab" stroke-width="1"/><rect x="1" y="9" width="27" height="12" rx="3" fill="#c8c8cc" stroke="#999" stroke-width="1"/><rect x="6" y="11" width="17" height="6" fill="#333"/><rect x="7" y="18" width="15" height="4" fill="#f4f4f4" stroke="#999" stroke-width="0.8"/><ellipse cx="14.5" cy="27" rx="13" ry="2" fill="#444"/><rect x="11" y="25" width="7" height="4" rx="1.5" fill="#3dba4e"/><rect x="13.8" y="21" width="1.4" height="5" fill="#888"/><circle cx="23" cy="12" r="1.2" fill="#3dba4e"/></svg>
<svg class="r" style="left:3707.0px;top:1960.5px;" width="26" height="30" viewBox="0 0 26 30"><path d="M3.5 1.2 H16 L22.8 8 V28.2 H3.5 Z" fill="#fff" stroke="#111" stroke-width="2.4"/><path d="M16 1 V8 H23 Z" fill="#111"/><rect x="0.5" y="10.3" width="25" height="11" rx="2.5" fill="#111"/><text x="13" y="19.6" font-size="9.6" font-weight="bold" text-anchor="middle" fill="#fff" font-family="Liberation Sans">LOG</text></svg>
<svg class="r" style="left:3751.5px;top:1964.0px;" width="22" height="22" viewBox="0 0 22 22"><rect x="0" y="0" width="2.5" height="22" fill="#777"/><path d="M3 2 Q8 0 12 2 Q17 4 21 2 V13 Q17 15 12 13 Q8 11 3 13 Z" fill="#888"/></svg>
<div class="r" style="left:3646.0px;top:2008.5px;width:93.0px;height:52.0px;background:#e6e6e6;"></div>
<div class="t" style="left:3669.0px;top:2017.0px;font-size:22.5px;line-height:36px;color:#333;font-weight:normal;">操作</div>
<svg class="r" style="left:3715.0px;top:2030.5px;" width="13" height="8" viewBox="0 0 13 8"><path d="M0 0 L13 0 L6.5 8 Z" fill="#333"/></svg>
<div class="r" style="left:328.0px;top:2120.5px;width:3489.0px;height:5.5px;background:#fff;"></div>
<div class="r" style="left:0.0px;top:2125.5px;width:3840.0px;height:34.5px;background:#00669a;"></div>
<div class="r" style="left:1324.0px;top:2137.0px;width:11.0px;height:11.0px;background:#e5262a;"></div>
<div class="t" style="left:1352.0px;top:2125.5px;font-size:21.8px;line-height:35px;color:#fff;font-weight:normal;">版权所有<span class="fc">:</span>广东宏见软件有限公司</div>
<div class="t" style="left:1752.0px;top:2125.0px;font-size:22.5px;line-height:36px;color:#fff;font-weight:normal;">售后电话: 0755-36657208</div>
<div class="t" style="left:2038.0px;top:2125.0px;font-size:22.5px;line-height:36px;color:#fff;font-weight:normal;">服务代码: 902997</div>
<div class="t" style="left:2279.0px;top:2125.0px;font-size:22.5px;line-height:36px;color:#fff;font-weight:normal;">粤ICP备10239503号</div>
<svg class="r" style="left:2491.0px;top:2130.0px;" width="22" height="26" viewBox="0 0 22 26"><circle cx="11" cy="10" r="8" fill="#f5d020"/><rect x="7" y="17" width="8" height="6" fill="#555"/><path d="M9 6 L11 12 L13 6" stroke="#b07000" fill="none" stroke-width="1.2"/></svg>
</body></html>
